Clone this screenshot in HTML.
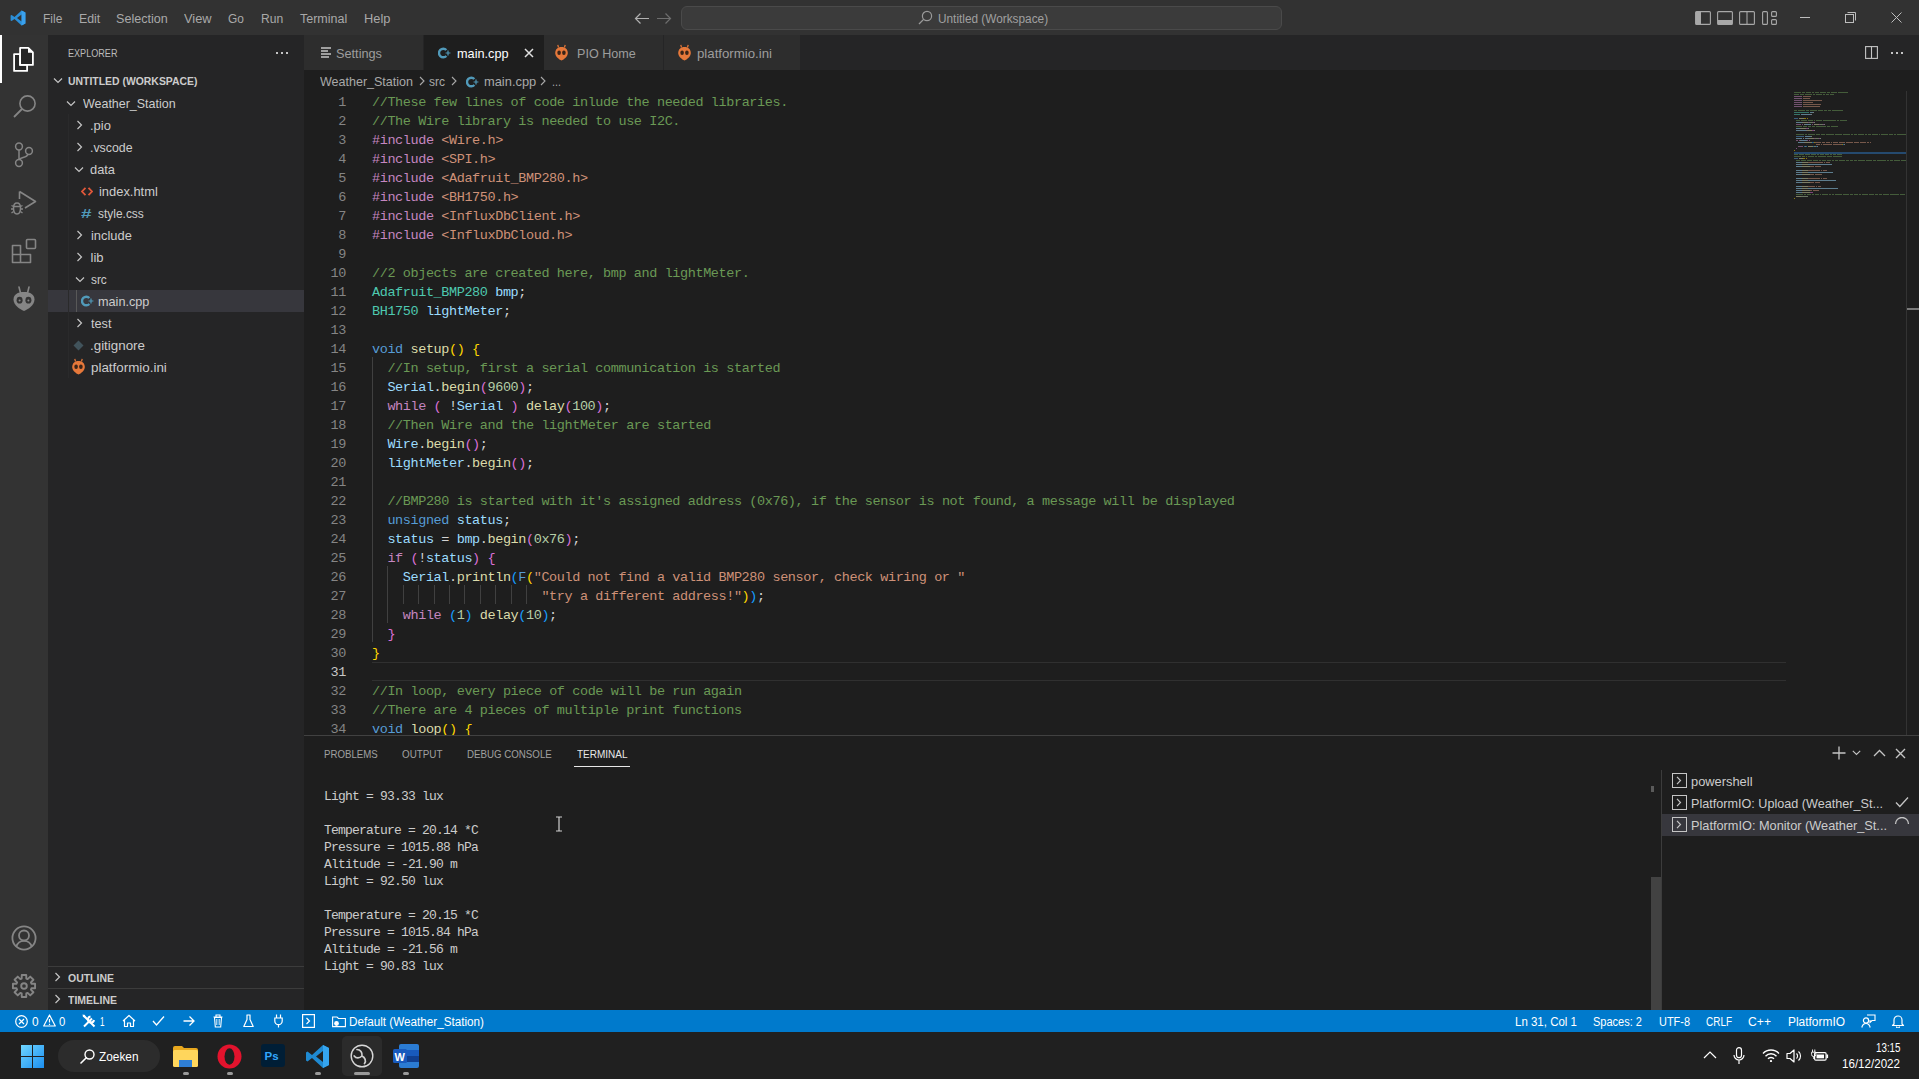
<!DOCTYPE html>
<html><head><meta charset="utf-8"><title>VS Code</title>
<style>
html,body{margin:0;padding:0;width:1919px;height:1079px;overflow:hidden;background:#1e1e1e;}
body{position:relative;font-family:"Liberation Sans",sans-serif;}
body>div,body>span,body>svg,.a{position:absolute;}
body>span{white-space:pre;transform-origin:0 0;}
</style></head><body>
<div style="left:0px;top:0px;width:1919px;height:35px;background:#323232;"></div>
<div style="left:0px;top:35px;width:48px;height:975px;background:#333333;"></div>
<div style="left:48px;top:35px;width:256px;height:975px;background:#252526;"></div>
<div style="left:304px;top:35px;width:1615px;height:975px;background:#1e1e1e;"></div>
<div style="left:304px;top:35px;width:1615px;height:35px;background:#252526;"></div>
<div style="left:0px;top:1010px;width:1919px;height:22px;background:#007acc;"></div>
<div style="left:0px;top:1032px;width:1919px;height:47px;background:#202020;"></div>
<svg style="left:10px;top:10px;width:16px;height:16px;" viewBox="0 0 16 16"><path d="M11.6 0.6 L15.4 2.4 V13.6 L11.6 15.4 L4.5 8.9 L1.6 11.1 L0.6 10.6 V5.4 L1.6 4.9 L4.5 7.1 Z M11.6 4.4 L7 8 L11.6 11.6 Z" fill="#2b8fd8"/><path d="M11.6 0.6 L15.4 2.4 V13.6 L11.6 15.4 Z" fill="#3aa1ee"/></svg>
<span style="left:43.2px;top:10.87px;font-family:'Liberation Sans', sans-serif;font-size:12.5px;line-height:16px;font-weight:400;color:#a9a9a9;letter-spacing:0px;transform:scaleX(0.9575);">File</span>
<span style="left:78.7px;top:10.87px;font-family:'Liberation Sans', sans-serif;font-size:12.5px;line-height:16px;font-weight:400;color:#a9a9a9;letter-spacing:0px;transform:scaleX(0.9885);">Edit</span>
<span style="left:116.2px;top:10.87px;font-family:'Liberation Sans', sans-serif;font-size:12.5px;line-height:16px;font-weight:400;color:#a9a9a9;letter-spacing:0px;transform:scaleX(1.0070);">Selection</span>
<span style="left:184.1px;top:10.87px;font-family:'Liberation Sans', sans-serif;font-size:12.5px;line-height:16px;font-weight:400;color:#a9a9a9;letter-spacing:0px;transform:scaleX(1.0270);">View</span>
<span style="left:228.1px;top:10.87px;font-family:'Liberation Sans', sans-serif;font-size:12.5px;line-height:16px;font-weight:400;color:#a9a9a9;letter-spacing:0px;transform:scaleX(0.9528);">Go</span>
<span style="left:260.5px;top:10.87px;font-family:'Liberation Sans', sans-serif;font-size:12.5px;line-height:16px;font-weight:400;color:#a9a9a9;letter-spacing:0px;transform:scaleX(0.9678);">Run</span>
<span style="left:300px;top:10.87px;font-family:'Liberation Sans', sans-serif;font-size:12.5px;line-height:16px;font-weight:400;color:#a9a9a9;letter-spacing:0px;">Terminal</span>
<span style="left:363.6px;top:10.87px;font-family:'Liberation Sans', sans-serif;font-size:12.5px;line-height:16px;font-weight:400;color:#a9a9a9;letter-spacing:0px;transform:scaleX(1.0265);">Help</span>
<svg style="left:634px;top:12px;width:16px;height:13px;" viewBox="0 0 16 13"><path d="M1.5 6.5 H15 M6.5 1.5 L1.5 6.5 L6.5 11.5" stroke="#b0b0b0" stroke-width="1.2" fill="none"/></svg>
<svg style="left:656px;top:12px;width:16px;height:13px;" viewBox="0 0 16 13"><path d="M1 6.5 H14.5 M9.5 1.5 L14.5 6.5 L9.5 11.5" stroke="#6e6e6e" stroke-width="1.2" fill="none"/></svg>
<div style="left:681px;top:6px;width:599px;height:22px;background:#3b3b3b;border:1px solid #4a4a4a;border-radius:6px;"></div>
<svg style="left:918px;top:10px;width:15px;height:15px;" viewBox="0 0 15 15"><circle cx="9" cy="6" r="4.6" stroke="#9a9a9a" stroke-width="1.2" fill="none"/><path d="M5.6 9.4 L1 14" stroke="#9a9a9a" stroke-width="1.3"/></svg>
<span style="left:937.9px;top:10.54px;font-family:'Liberation Sans', sans-serif;font-size:12px;line-height:16px;font-weight:400;color:#a0a0a0;letter-spacing:0px;transform:scaleX(0.9845);">Untitled (Workspace)</span>
<svg style="left:1695px;top:11px;width:16px;height:14px;" viewBox="0 0 16 14"><rect x="0.6" y="0.6" width="14.8" height="12.8" rx="1" stroke="#a8a8a8" stroke-width="1.1" fill="none"/><rect x="1" y="1" width="5" height="12" fill="#a8a8a8"/></svg>
<svg style="left:1717px;top:11px;width:16px;height:14px;" viewBox="0 0 16 14"><rect x="0.6" y="0.6" width="14.8" height="12.8" rx="1" stroke="#a8a8a8" stroke-width="1.1" fill="none"/><rect x="1" y="9" width="14" height="4" fill="#a8a8a8"/></svg>
<svg style="left:1739px;top:11px;width:16px;height:14px;" viewBox="0 0 16 14"><rect x="0.6" y="0.6" width="14.8" height="12.8" rx="1" stroke="#a8a8a8" stroke-width="1.1" fill="none"/><path d="M8 1 V13" stroke="#a8a8a8" stroke-width="1.1"/></svg>
<svg style="left:1762px;top:11px;width:15px;height:14px;" viewBox="0 0 15 14"><rect x="0.6" y="0.6" width="4.8" height="12.8" rx="1" stroke="#a8a8a8" stroke-width="1.1" fill="none"/><rect x="9.6" y="0.6" width="4.8" height="4.8" rx="1" stroke="#a8a8a8" stroke-width="1.1" fill="none"/><rect x="9.6" y="8.6" width="4.8" height="4.8" rx="1" stroke="#a8a8a8" stroke-width="1.1" fill="none"/></svg>
<div style="left:1800px;top:17px;width:10px;height:1px;background:#bdbdbd;"></div>
<svg style="left:1845px;top:12px;width:11px;height:11px;" viewBox="0 0 11 11"><rect x="0.5" y="2.5" width="8" height="8" stroke="#bdbdbd" fill="none"/><path d="M2.5 0.5 H10.5 V8.5" stroke="#bdbdbd" fill="none"/></svg>
<svg style="left:1891px;top:12px;width:11px;height:11px;" viewBox="0 0 11 11"><path d="M0.5 0.5 L10.5 10.5 M10.5 0.5 L0.5 10.5" stroke="#bdbdbd" stroke-width="1"/></svg>
<div style="left:0px;top:35px;width:2px;height:48px;background:#ffffff;"></div>
<svg style="left:0px;top:35px;width:48px;height:40px;" viewBox="0 0 48 40"><path d="M14.1 19.1 H20.1 V29.9 H27.1 V35.9 H14.1 Z" fill="#262626" stroke="#ffffff" stroke-width="1.8" stroke-linejoin="round"/><path d="M20.1 12.9 H28.3 L32.9 17.5 V29.9 H20.1 Z" fill="#262626" stroke="#ffffff" stroke-width="1.8" stroke-linejoin="round"/><path d="M28 13 V17.8 H32.8 Z" fill="#ffffff"/></svg>
<svg style="left:12px;top:93px;width:26px;height:26px;" viewBox="0 0 26 26"><circle cx="15.5" cy="10.5" r="7.6" stroke="#858585" stroke-width="1.6" fill="none"/><path d="M10 16 L2 24" stroke="#858585" stroke-width="1.8"/></svg>
<svg style="left:12px;top:141px;width:24px;height:28px;" viewBox="0 0 24 28"><circle cx="7" cy="5.5" r="3.4" stroke="#858585" stroke-width="1.5" fill="none"/><circle cx="17" cy="10" r="3.4" stroke="#858585" stroke-width="1.5" fill="none"/><circle cx="7" cy="22" r="3.4" stroke="#858585" stroke-width="1.5" fill="none"/><path d="M7 9 V18.5 M16 13 C15 17 9 16 7.5 18.5" stroke="#858585" stroke-width="1.5" fill="none"/></svg>
<svg style="left:0px;top:185px;width:48px;height:32px;" viewBox="0 0 48 32"><path d="M19.5 6.5 V14 M19.5 6.5 L35.5 16.5 L25 23" stroke="#858585" stroke-width="1.6" fill="none" stroke-linejoin="round"/><path d="M13.5 23 C13.5 19.5 15 18 17 18 C19 18 20.5 19.5 20.5 23 C20.5 27 19 29 17 29 C15 29 13.5 27 13.5 23 Z" stroke="#858585" stroke-width="1.5" fill="none"/><path d="M11.5 20.5 L13.5 21.5 M22.5 20.5 L20.5 21.5 M11 24 H13.5 M23 24 H20.5 M11.5 28 L13.5 26.5 M22.5 28 L20.5 26.5 M14 21.5 H20" stroke="#858585" stroke-width="1.3"/></svg>
<svg style="left:0px;top:235px;width:48px;height:32px;" viewBox="0 0 48 32"><path d="M12.5 10.5 H20.5 V19.5 H30.5 V27.5 H12.5 Z M12.5 19.5 H20.5 V27.5" stroke="#858585" stroke-width="1.6" fill="none" stroke-linejoin="round"/><rect x="26.5" y="4.5" width="9" height="9" rx="1" stroke="#858585" stroke-width="1.6" fill="none"/></svg>
<svg style="left:0px;top:284px;width:48px;height:30px;" viewBox="0 0 48 30"><path d="M19 3 L20.5 9 M29 3 L27.5 9" stroke="#858585" stroke-width="1.6" stroke-linecap="round"/><path d="M24 8 C30.5 8 34.5 10.5 34.5 15.5 C34.5 21 28 25.5 24 27 C20 25.5 13.5 21 13.5 15.5 C13.5 10.5 17.5 8 24 8 Z" fill="#858585"/><ellipse cx="19.6" cy="16.2" rx="3" ry="3.4" fill="#333"/><ellipse cx="28.4" cy="16.2" rx="3" ry="3.4" fill="#333"/><circle cx="19.6" cy="16.5" r="1" fill="#858585"/><circle cx="28.4" cy="16.5" r="1" fill="#858585"/></svg>
<svg style="left:11px;top:925px;width:26px;height:26px;" viewBox="0 0 26 26"><circle cx="13" cy="13" r="11.6" stroke="#858585" stroke-width="1.8" fill="none"/><circle cx="13" cy="10.5" r="5" stroke="#858585" stroke-width="1.8" fill="none"/><path d="M5.2 21.8 C6.5 17.5 9.5 15.8 13 15.8 C16.5 15.8 19.5 17.5 20.8 21.8" stroke="#858585" stroke-width="1.8" fill="none"/></svg>
<svg style="left:11px;top:973px;width:26px;height:26px;" viewBox="0 0 26 26"><polygon points="10.76,1.93 15.24,1.93 15.31,5.55 16.64,6.10 19.24,3.58 22.42,6.76 19.90,9.36 20.45,10.69 24.07,10.76 24.07,15.24 20.45,15.31 19.90,16.64 22.42,19.24 19.24,22.42 16.64,19.90 15.31,20.45 15.24,24.07 10.76,24.07 10.69,20.45 9.36,19.90 6.76,22.42 3.58,19.24 6.10,16.64 5.55,15.31 1.93,15.24 1.93,10.76 5.55,10.69 6.10,9.36 3.58,6.76 6.76,3.58 9.36,6.10 10.69,5.55" stroke="#858585" stroke-width="1.9" fill="none" stroke-linejoin="round"/><circle cx="13" cy="13" r="2.8" stroke="#858585" stroke-width="1.9" fill="none"/></svg>
<span style="left:68px;top:46.19px;font-family:'Liberation Sans', sans-serif;font-size:11px;line-height:14px;font-weight:400;color:#bbbbbb;letter-spacing:0px;transform:scaleX(0.8261);">EXPLORER</span>
<div style="left:276px;top:52px;width:2px;height:2px;background:#c5c5c5;"></div>
<div style="left:281px;top:52px;width:2px;height:2px;background:#c5c5c5;"></div>
<div style="left:286px;top:52px;width:2px;height:2px;background:#c5c5c5;"></div>
<svg style="left:53px;top:77px;width:10px;height:7px;" viewBox="0 0 10 7"><path d="M1 1.5 L5 5.5 L9 1.5" stroke="#c5c5c5" stroke-width="1.2" fill="none"/></svg>
<span style="left:68px;top:74.19px;font-family:'Liberation Sans', sans-serif;font-size:11px;line-height:14px;font-weight:700;color:#cccccc;letter-spacing:0px;transform:scaleX(0.9474);">UNTITLED (WORKSPACE)</span>
<div style="left:48px;top:290px;width:256px;height:22px;background:#37373d;"></div>
<div style="left:76px;top:290px;width:1px;height:22px;background:#585858;"></div>
<div style="left:68px;top:114px;width:1px;height:264px;background:#2a2a2b;"></div>
<span style="left:82.7px;top:94.80px;font-family:'Liberation Sans', sans-serif;font-size:13px;line-height:17px;font-weight:400;color:#cccccc;letter-spacing:0px;transform:scaleX(0.9585);">Weather_Station</span>
<svg style="left:66px;top:100px;width:10px;height:7px;" viewBox="0 0 10 7"><path d="M1 1.5 L5 5.5 L9 1.5" stroke="#c5c5c5" stroke-width="1.2" fill="none"/></svg>
<span style="left:89.8px;top:116.80px;font-family:'Liberation Sans', sans-serif;font-size:13px;line-height:17px;font-weight:400;color:#cccccc;letter-spacing:0px;transform:scaleX(0.9967);">.pio</span>
<svg style="left:76px;top:120px;width:7px;height:10px;" viewBox="0 0 7 10"><path d="M1.5 1 L5.5 5 L1.5 9" stroke="#c5c5c5" stroke-width="1.2" fill="none"/></svg>
<span style="left:89.8px;top:138.80px;font-family:'Liberation Sans', sans-serif;font-size:13px;line-height:17px;font-weight:400;color:#cccccc;letter-spacing:0px;transform:scaleX(0.9506);">.vscode</span>
<svg style="left:76px;top:142px;width:7px;height:10px;" viewBox="0 0 7 10"><path d="M1.5 1 L5.5 5 L1.5 9" stroke="#c5c5c5" stroke-width="1.2" fill="none"/></svg>
<span style="left:90px;top:160.80px;font-family:'Liberation Sans', sans-serif;font-size:13px;line-height:17px;font-weight:400;color:#cccccc;letter-spacing:0px;transform:scaleX(0.9877);">data</span>
<svg style="left:74.3px;top:166px;width:10px;height:7px;" viewBox="0 0 10 7"><path d="M1 1.5 L5 5.5 L9 1.5" stroke="#c5c5c5" stroke-width="1.2" fill="none"/></svg>
<span style="left:98.5px;top:182.80px;font-family:'Liberation Sans', sans-serif;font-size:13px;line-height:17px;font-weight:400;color:#cccccc;letter-spacing:0px;transform:scaleX(0.9924);">index.html</span>
<svg style="left:80.8px;top:187px;width:12px;height:9px;" viewBox="0 0 12 9"><path d="M4.5 0.8 L1 4.5 L4.5 8.2 M7.5 0.8 L11 4.5 L7.5 8.2" stroke="#e0583a" stroke-width="1.8" fill="none"/></svg>
<span style="left:98px;top:204.80px;font-family:'Liberation Sans', sans-serif;font-size:13px;line-height:17px;font-weight:400;color:#cccccc;letter-spacing:0px;transform:scaleX(0.9189);">style.css</span>
<span style="left:80.5px;top:204.80px;font-family:'Liberation Sans', sans-serif;font-size:13px;line-height:17px;font-weight:700;color:#519aba;letter-spacing:0px;transform:scaleX(1.4514);">#</span>
<span style="left:90.5px;top:226.80px;font-family:'Liberation Sans', sans-serif;font-size:13px;line-height:17px;font-weight:400;color:#cccccc;letter-spacing:0px;transform:scaleX(0.9902);">include</span>
<svg style="left:76.3px;top:230px;width:7px;height:10px;" viewBox="0 0 7 10"><path d="M1.5 1 L5.5 5 L1.5 9" stroke="#c5c5c5" stroke-width="1.2" fill="none"/></svg>
<span style="left:90.5px;top:248.80px;font-family:'Liberation Sans', sans-serif;font-size:13px;line-height:17px;font-weight:400;color:#cccccc;letter-spacing:0px;">lib</span>
<svg style="left:76.3px;top:252px;width:7px;height:10px;" viewBox="0 0 7 10"><path d="M1.5 1 L5.5 5 L1.5 9" stroke="#c5c5c5" stroke-width="1.2" fill="none"/></svg>
<span style="left:90.5px;top:270.80px;font-family:'Liberation Sans', sans-serif;font-size:13px;line-height:17px;font-weight:400;color:#cccccc;letter-spacing:0px;transform:scaleX(0.9110);">src</span>
<svg style="left:74.7px;top:276px;width:10px;height:7px;" viewBox="0 0 10 7"><path d="M1 1.5 L5 5.5 L9 1.5" stroke="#c5c5c5" stroke-width="1.2" fill="none"/></svg>
<span style="left:98.3px;top:292.80px;font-family:'Liberation Sans', sans-serif;font-size:13px;line-height:17px;font-weight:400;color:#cccccc;letter-spacing:0px;transform:scaleX(0.9744);">main.cpp</span>
<svg style="left:80.5px;top:295px;width:13px;height:12px;" viewBox="0 0 13 12"><path d="M8.4 3 A4.3 4.3 0 1 0 8.4 9" stroke="#519aba" stroke-width="2.4" fill="none"/><path d="M7.6 6 H12.4 M10 3.6 V8.4" stroke="#519aba" stroke-width="1.2"/></svg>
<span style="left:90.5px;top:314.80px;font-family:'Liberation Sans', sans-serif;font-size:13px;line-height:17px;font-weight:400;color:#cccccc;letter-spacing:0px;transform:scaleX(0.9776);">test</span>
<svg style="left:76.3px;top:318px;width:7px;height:10px;" viewBox="0 0 7 10"><path d="M1.5 1 L5.5 5 L1.5 9" stroke="#c5c5c5" stroke-width="1.2" fill="none"/></svg>
<span style="left:89.7px;top:336.80px;font-family:'Liberation Sans', sans-serif;font-size:13px;line-height:17px;font-weight:400;color:#cccccc;letter-spacing:0px;transform:scaleX(1.0283);">.gitignore</span>
<svg style="left:72.7px;top:340px;width:11px;height:11px;" viewBox="0 0 11 11"><path d="M5.5 0.5 L10.5 5.5 L5.5 10.5 L0.5 5.5 Z" fill="#41535b"/></svg>
<span style="left:90.5px;top:358.80px;font-family:'Liberation Sans', sans-serif;font-size:13px;line-height:17px;font-weight:400;color:#cccccc;letter-spacing:0px;transform:scaleX(1.0285);">platformio.ini</span>
<svg style="left:72px;top:358px;width:13px;height:17px;" viewBox="0 0 13 17"><path d="M3.5 3.5 L2.8 0.8 M9.5 3.5 L10.2 0.8" stroke="#e6783a" stroke-width="1.2"/><path d="M6.5 3 C10.5 3 12.8 5.6 12.8 9 C12.8 12.5 9 15.5 6.5 16.5 C4 15.5 0.2 12.5 0.2 9 C0.2 5.6 2.5 3 6.5 3 Z" fill="#e6783a"/><ellipse cx="4.1" cy="8.8" rx="1.8" ry="2.2" fill="#3a2418"/><ellipse cx="8.9" cy="8.8" rx="1.8" ry="2.2" fill="#3a2418"/></svg>
<div style="left:48px;top:966px;width:256px;height:1px;background:#3c3c3c;"></div>
<div style="left:48px;top:988px;width:256px;height:1px;background:#3c3c3c;"></div>
<svg style="left:54px;top:972px;width:7px;height:10px;" viewBox="0 0 7 10"><path d="M1.5 1 L5.5 5 L1.5 9" stroke="#c5c5c5" stroke-width="1.2" fill="none"/></svg>
<svg style="left:54px;top:994px;width:7px;height:10px;" viewBox="0 0 7 10"><path d="M1.5 1 L5.5 5 L1.5 9" stroke="#c5c5c5" stroke-width="1.2" fill="none"/></svg>
<span style="left:68px;top:971.19px;font-family:'Liberation Sans', sans-serif;font-size:11px;line-height:14px;font-weight:700;color:#cccccc;letter-spacing:0px;transform:scaleX(0.9528);">OUTLINE</span>
<span style="left:68px;top:993.19px;font-family:'Liberation Sans', sans-serif;font-size:11px;line-height:14px;font-weight:700;color:#cccccc;letter-spacing:0px;transform:scaleX(0.9544);">TIMELINE</span>
<div style="left:304px;top:35px;width:119px;height:35px;background:#2d2d2d;"></div>
<div style="left:424px;top:35px;width:120px;height:35px;background:#1e1e1e;"></div>
<div style="left:544px;top:35px;width:119px;height:35px;background:#2d2d2d;"></div>
<div style="left:664px;top:35px;width:136px;height:35px;background:#2d2d2d;"></div>
<svg style="left:321px;top:47px;width:11px;height:11px;" viewBox="0 0 11 11"><path d="M0 1 H10 M0 4 H7 M0 7 H10 M0 10 H8" stroke="#c5c5c5" stroke-width="1.6"/></svg>
<span style="left:336px;top:44.80px;font-family:'Liberation Sans', sans-serif;font-size:13px;line-height:17px;font-weight:400;color:#9d9d9d;letter-spacing:0px;transform:scaleX(0.9790);">Settings</span>
<svg style="left:438px;top:47px;width:13px;height:12px;" viewBox="0 0 13 12"><path d="M8.4 3 A4.3 4.3 0 1 0 8.4 9" stroke="#519aba" stroke-width="2.4" fill="none"/><path d="M7.6 6 H12.4 M10 3.6 V8.4" stroke="#519aba" stroke-width="1.2"/></svg>
<span style="left:456.5px;top:44.80px;font-family:'Liberation Sans', sans-serif;font-size:13px;line-height:17px;font-weight:400;color:#ffffff;letter-spacing:0px;transform:scaleX(0.9763);">main.cpp</span>
<svg style="left:524px;top:48px;width:10px;height:10px;" viewBox="0 0 10 10"><path d="M1 1 L9 9 M9 1 L1 9" stroke="#e0e0e0" stroke-width="1.5"/></svg>
<svg style="left:555px;top:44px;width:13px;height:17px;" viewBox="0 0 13 17"><path d="M3.5 3.5 L2.8 0.8 M9.5 3.5 L10.2 0.8" stroke="#e6783a" stroke-width="1.2"/><path d="M6.5 3 C10.5 3 12.8 5.6 12.8 9 C12.8 12.5 9 15.5 6.5 16.5 C4 15.5 0.2 12.5 0.2 9 C0.2 5.6 2.5 3 6.5 3 Z" fill="#e6783a"/><ellipse cx="4.1" cy="8.8" rx="1.8" ry="2.2" fill="#3a2418"/><ellipse cx="8.9" cy="8.8" rx="1.8" ry="2.2" fill="#3a2418"/></svg>
<span style="left:576.5px;top:44.70px;font-family:'Liberation Sans', sans-serif;font-size:13px;line-height:17px;font-weight:400;color:#9d9d9d;letter-spacing:0px;transform:scaleX(0.9673);">PIO Home</span>
<svg style="left:678px;top:44px;width:13px;height:17px;" viewBox="0 0 13 17"><path d="M3.5 3.5 L2.8 0.8 M9.5 3.5 L10.2 0.8" stroke="#e6783a" stroke-width="1.2"/><path d="M6.5 3 C10.5 3 12.8 5.6 12.8 9 C12.8 12.5 9 15.5 6.5 16.5 C4 15.5 0.2 12.5 0.2 9 C0.2 5.6 2.5 3 6.5 3 Z" fill="#e6783a"/><ellipse cx="4.1" cy="8.8" rx="1.8" ry="2.2" fill="#3a2418"/><ellipse cx="8.9" cy="8.8" rx="1.8" ry="2.2" fill="#3a2418"/></svg>
<span style="left:697px;top:44.70px;font-family:'Liberation Sans', sans-serif;font-size:13px;line-height:17px;font-weight:400;color:#9d9d9d;letter-spacing:0px;transform:scaleX(1.0176);">platformio.ini</span>
<svg style="left:1865px;top:46px;width:13px;height:13px;" viewBox="0 0 13 13"><rect x="0.6" y="0.6" width="11.8" height="11.8" stroke="#c5c5c5" stroke-width="1.1" fill="none"/><path d="M6.5 0.6 V12.4" stroke="#c5c5c5" stroke-width="1.1"/></svg>
<div style="left:1891px;top:52px;width:2px;height:2px;background:#c5c5c5;"></div>
<div style="left:1896px;top:52px;width:2px;height:2px;background:#c5c5c5;"></div>
<div style="left:1901px;top:52px;width:2px;height:2px;background:#c5c5c5;"></div>
<span style="left:320px;top:73.00px;font-family:'Liberation Sans', sans-serif;font-size:13px;line-height:17px;font-weight:400;color:#a9a9a9;letter-spacing:0px;transform:scaleX(0.9626);">Weather_Station</span>
<svg style="left:419px;top:76px;width:6px;height:10px;" viewBox="0 0 6 10"><path d="M1 1 L5 5 L1 9" stroke="#a9a9a9" stroke-width="1.1" fill="none"/></svg>
<span style="left:429px;top:73.00px;font-family:'Liberation Sans', sans-serif;font-size:13px;line-height:17px;font-weight:400;color:#a9a9a9;letter-spacing:0px;transform:scaleX(0.9225);">src</span>
<svg style="left:451px;top:76px;width:6px;height:10px;" viewBox="0 0 6 10"><path d="M1 1 L5 5 L1 9" stroke="#a9a9a9" stroke-width="1.1" fill="none"/></svg>
<svg style="left:466px;top:76px;width:13px;height:12px;" viewBox="0 0 13 12"><path d="M8.4 3 A4.3 4.3 0 1 0 8.4 9" stroke="#519aba" stroke-width="2.4" fill="none"/><path d="M7.6 6 H12.4 M10 3.6 V8.4" stroke="#519aba" stroke-width="1.2"/></svg>
<span style="left:483.6px;top:73.00px;font-family:'Liberation Sans', sans-serif;font-size:13px;line-height:17px;font-weight:400;color:#a9a9a9;letter-spacing:0px;transform:scaleX(0.9896);">main.cpp</span>
<svg style="left:540px;top:76px;width:6px;height:10px;" viewBox="0 0 6 10"><path d="M1 1 L5 5 L1 9" stroke="#a9a9a9" stroke-width="1.1" fill="none"/></svg>
<span style="left:552px;top:73.00px;font-family:'Liberation Sans', sans-serif;font-size:13px;line-height:17px;font-weight:400;color:#a9a9a9;letter-spacing:0px;transform:scaleX(0.8300);">...</span>
<div style="left:372px;top:662px;width:1414px;height:17px;border-top:1px solid #303030;border-bottom:1px solid #303030;"></div>
<div style="left:372px;top:357px;width:1px;height:285px;background:#404040;"></div>
<div style="left:387px;top:566px;width:1px;height:57px;background:#404040;"></div>
<div style="left:403px;top:585px;width:1px;height:19px;background:#404040;"></div>
<div style="left:418px;top:585px;width:1px;height:19px;background:#404040;"></div>
<div style="left:434px;top:585px;width:1px;height:19px;background:#404040;"></div>
<div style="left:449px;top:585px;width:1px;height:19px;background:#404040;"></div>
<div style="left:464px;top:585px;width:1px;height:19px;background:#404040;"></div>
<div style="left:480px;top:585px;width:1px;height:19px;background:#404040;"></div>
<div style="left:495px;top:585px;width:1px;height:19px;background:#404040;"></div>
<div style="left:511px;top:585px;width:1px;height:19px;background:#404040;"></div>
<div style="left:526px;top:585px;width:1px;height:19px;background:#404040;"></div>
<span style="left:338.3px;top:94.01px;font-family:'Liberation Mono', monospace;font-size:13.5px;line-height:18px;font-weight:400;color:#858585;letter-spacing:-0.39999999999999947px;">1</span>
<span style="left:372.0px;top:94.01px;font-family:'Liberation Mono', monospace;font-size:13.5px;line-height:18px;font-weight:400;color:#6a9955;letter-spacing:-0.39999999999999947px;">//These few lines of code inlude the needed libraries.</span>
<span style="left:338.3px;top:113.01px;font-family:'Liberation Mono', monospace;font-size:13.5px;line-height:18px;font-weight:400;color:#858585;letter-spacing:-0.39999999999999947px;">2</span>
<span style="left:372.0px;top:113.01px;font-family:'Liberation Mono', monospace;font-size:13.5px;line-height:18px;font-weight:400;color:#6a9955;letter-spacing:-0.39999999999999947px;">//The Wire library is needed to use I2C.</span>
<span style="left:338.3px;top:132.01px;font-family:'Liberation Mono', monospace;font-size:13.5px;line-height:18px;font-weight:400;color:#858585;letter-spacing:-0.39999999999999947px;">3</span>
<span style="left:372.0px;top:132.01px;font-family:'Liberation Mono', monospace;font-size:13.5px;line-height:18px;font-weight:400;color:#c586c0;letter-spacing:-0.39999999999999947px;">#include </span>
<span style="left:441.3px;top:132.01px;font-family:'Liberation Mono', monospace;font-size:13.5px;line-height:18px;font-weight:400;color:#ce9178;letter-spacing:-0.39999999999999947px;">&lt;Wire.h&gt;</span>
<span style="left:338.3px;top:151.01px;font-family:'Liberation Mono', monospace;font-size:13.5px;line-height:18px;font-weight:400;color:#858585;letter-spacing:-0.39999999999999947px;">4</span>
<span style="left:372.0px;top:151.01px;font-family:'Liberation Mono', monospace;font-size:13.5px;line-height:18px;font-weight:400;color:#c586c0;letter-spacing:-0.39999999999999947px;">#include </span>
<span style="left:441.3px;top:151.01px;font-family:'Liberation Mono', monospace;font-size:13.5px;line-height:18px;font-weight:400;color:#ce9178;letter-spacing:-0.39999999999999947px;">&lt;SPI.h&gt;</span>
<span style="left:338.3px;top:170.01px;font-family:'Liberation Mono', monospace;font-size:13.5px;line-height:18px;font-weight:400;color:#858585;letter-spacing:-0.39999999999999947px;">5</span>
<span style="left:372.0px;top:170.01px;font-family:'Liberation Mono', monospace;font-size:13.5px;line-height:18px;font-weight:400;color:#c586c0;letter-spacing:-0.39999999999999947px;">#include </span>
<span style="left:441.3px;top:170.01px;font-family:'Liberation Mono', monospace;font-size:13.5px;line-height:18px;font-weight:400;color:#ce9178;letter-spacing:-0.39999999999999947px;">&lt;Adafruit_BMP280.h&gt;</span>
<span style="left:338.3px;top:189.01px;font-family:'Liberation Mono', monospace;font-size:13.5px;line-height:18px;font-weight:400;color:#858585;letter-spacing:-0.39999999999999947px;">6</span>
<span style="left:372.0px;top:189.01px;font-family:'Liberation Mono', monospace;font-size:13.5px;line-height:18px;font-weight:400;color:#c586c0;letter-spacing:-0.39999999999999947px;">#include </span>
<span style="left:441.3px;top:189.01px;font-family:'Liberation Mono', monospace;font-size:13.5px;line-height:18px;font-weight:400;color:#ce9178;letter-spacing:-0.39999999999999947px;">&lt;BH1750.h&gt;</span>
<span style="left:338.3px;top:208.01px;font-family:'Liberation Mono', monospace;font-size:13.5px;line-height:18px;font-weight:400;color:#858585;letter-spacing:-0.39999999999999947px;">7</span>
<span style="left:372.0px;top:208.01px;font-family:'Liberation Mono', monospace;font-size:13.5px;line-height:18px;font-weight:400;color:#c586c0;letter-spacing:-0.39999999999999947px;">#include </span>
<span style="left:441.3px;top:208.01px;font-family:'Liberation Mono', monospace;font-size:13.5px;line-height:18px;font-weight:400;color:#ce9178;letter-spacing:-0.39999999999999947px;">&lt;InfluxDbClient.h&gt;</span>
<span style="left:338.3px;top:227.01px;font-family:'Liberation Mono', monospace;font-size:13.5px;line-height:18px;font-weight:400;color:#858585;letter-spacing:-0.39999999999999947px;">8</span>
<span style="left:372.0px;top:227.01px;font-family:'Liberation Mono', monospace;font-size:13.5px;line-height:18px;font-weight:400;color:#c586c0;letter-spacing:-0.39999999999999947px;">#include </span>
<span style="left:441.3px;top:227.01px;font-family:'Liberation Mono', monospace;font-size:13.5px;line-height:18px;font-weight:400;color:#ce9178;letter-spacing:-0.39999999999999947px;">&lt;InfluxDbCloud.h&gt;</span>
<span style="left:338.3px;top:246.01px;font-family:'Liberation Mono', monospace;font-size:13.5px;line-height:18px;font-weight:400;color:#858585;letter-spacing:-0.39999999999999947px;">9</span>
<span style="left:330.6px;top:265.01px;font-family:'Liberation Mono', monospace;font-size:13.5px;line-height:18px;font-weight:400;color:#858585;letter-spacing:-0.39999999999999947px;">10</span>
<span style="left:372.0px;top:265.01px;font-family:'Liberation Mono', monospace;font-size:13.5px;line-height:18px;font-weight:400;color:#6a9955;letter-spacing:-0.39999999999999947px;">//2 objects are created here, bmp and lightMeter.</span>
<span style="left:330.6px;top:284.01px;font-family:'Liberation Mono', monospace;font-size:13.5px;line-height:18px;font-weight:400;color:#858585;letter-spacing:-0.39999999999999947px;">11</span>
<span style="left:372.0px;top:284.01px;font-family:'Liberation Mono', monospace;font-size:13.5px;line-height:18px;font-weight:400;color:#4ec9b0;letter-spacing:-0.39999999999999947px;">Adafruit_BMP280</span>
<span style="left:495.2px;top:284.01px;font-family:'Liberation Mono', monospace;font-size:13.5px;line-height:18px;font-weight:400;color:#9cdcfe;letter-spacing:-0.39999999999999947px;">bmp</span>
<span style="left:518.3px;top:284.01px;font-family:'Liberation Mono', monospace;font-size:13.5px;line-height:18px;font-weight:400;color:#d4d4d4;letter-spacing:-0.39999999999999947px;">;</span>
<span style="left:330.6px;top:303.01px;font-family:'Liberation Mono', monospace;font-size:13.5px;line-height:18px;font-weight:400;color:#858585;letter-spacing:-0.39999999999999947px;">12</span>
<span style="left:372.0px;top:303.01px;font-family:'Liberation Mono', monospace;font-size:13.5px;line-height:18px;font-weight:400;color:#4ec9b0;letter-spacing:-0.39999999999999947px;">BH1750</span>
<span style="left:425.9px;top:303.01px;font-family:'Liberation Mono', monospace;font-size:13.5px;line-height:18px;font-weight:400;color:#9cdcfe;letter-spacing:-0.39999999999999947px;">lightMeter</span>
<span style="left:502.9px;top:303.01px;font-family:'Liberation Mono', monospace;font-size:13.5px;line-height:18px;font-weight:400;color:#d4d4d4;letter-spacing:-0.39999999999999947px;">;</span>
<span style="left:330.6px;top:322.01px;font-family:'Liberation Mono', monospace;font-size:13.5px;line-height:18px;font-weight:400;color:#858585;letter-spacing:-0.39999999999999947px;">13</span>
<span style="left:330.6px;top:341.01px;font-family:'Liberation Mono', monospace;font-size:13.5px;line-height:18px;font-weight:400;color:#858585;letter-spacing:-0.39999999999999947px;">14</span>
<span style="left:372.0px;top:341.01px;font-family:'Liberation Mono', monospace;font-size:13.5px;line-height:18px;font-weight:400;color:#569cd6;letter-spacing:-0.39999999999999947px;">void</span>
<span style="left:410.5px;top:341.01px;font-family:'Liberation Mono', monospace;font-size:13.5px;line-height:18px;font-weight:400;color:#dcdcaa;letter-spacing:-0.39999999999999947px;">setup</span>
<span style="left:449.0px;top:341.01px;font-family:'Liberation Mono', monospace;font-size:13.5px;line-height:18px;font-weight:400;color:#ffd700;letter-spacing:-0.39999999999999947px;">()</span>
<span style="left:472.1px;top:341.01px;font-family:'Liberation Mono', monospace;font-size:13.5px;line-height:18px;font-weight:400;color:#ffd700;letter-spacing:-0.39999999999999947px;">{</span>
<span style="left:330.6px;top:360.01px;font-family:'Liberation Mono', monospace;font-size:13.5px;line-height:18px;font-weight:400;color:#858585;letter-spacing:-0.39999999999999947px;">15</span>
<span style="left:387.4px;top:360.01px;font-family:'Liberation Mono', monospace;font-size:13.5px;line-height:18px;font-weight:400;color:#6a9955;letter-spacing:-0.39999999999999947px;">//In setup, first a serial communication is started</span>
<span style="left:330.6px;top:379.01px;font-family:'Liberation Mono', monospace;font-size:13.5px;line-height:18px;font-weight:400;color:#858585;letter-spacing:-0.39999999999999947px;">16</span>
<span style="left:387.4px;top:379.01px;font-family:'Liberation Mono', monospace;font-size:13.5px;line-height:18px;font-weight:400;color:#9cdcfe;letter-spacing:-0.39999999999999947px;">Serial</span>
<span style="left:433.6px;top:379.01px;font-family:'Liberation Mono', monospace;font-size:13.5px;line-height:18px;font-weight:400;color:#d4d4d4;letter-spacing:-0.39999999999999947px;">.</span>
<span style="left:441.3px;top:379.01px;font-family:'Liberation Mono', monospace;font-size:13.5px;line-height:18px;font-weight:400;color:#dcdcaa;letter-spacing:-0.39999999999999947px;">begin</span>
<span style="left:479.8px;top:379.01px;font-family:'Liberation Mono', monospace;font-size:13.5px;line-height:18px;font-weight:400;color:#da70d6;letter-spacing:-0.39999999999999947px;">(</span>
<span style="left:487.5px;top:379.01px;font-family:'Liberation Mono', monospace;font-size:13.5px;line-height:18px;font-weight:400;color:#b5cea8;letter-spacing:-0.39999999999999947px;">9600</span>
<span style="left:518.3px;top:379.01px;font-family:'Liberation Mono', monospace;font-size:13.5px;line-height:18px;font-weight:400;color:#da70d6;letter-spacing:-0.39999999999999947px;">)</span>
<span style="left:526.0px;top:379.01px;font-family:'Liberation Mono', monospace;font-size:13.5px;line-height:18px;font-weight:400;color:#d4d4d4;letter-spacing:-0.39999999999999947px;">;</span>
<span style="left:330.6px;top:398.01px;font-family:'Liberation Mono', monospace;font-size:13.5px;line-height:18px;font-weight:400;color:#858585;letter-spacing:-0.39999999999999947px;">17</span>
<span style="left:387.4px;top:398.01px;font-family:'Liberation Mono', monospace;font-size:13.5px;line-height:18px;font-weight:400;color:#c586c0;letter-spacing:-0.39999999999999947px;">while</span>
<span style="left:433.6px;top:398.01px;font-family:'Liberation Mono', monospace;font-size:13.5px;line-height:18px;font-weight:400;color:#da70d6;letter-spacing:-0.39999999999999947px;">(</span>
<span style="left:449.0px;top:398.01px;font-family:'Liberation Mono', monospace;font-size:13.5px;line-height:18px;font-weight:400;color:#d4d4d4;letter-spacing:-0.39999999999999947px;">!</span>
<span style="left:456.7px;top:398.01px;font-family:'Liberation Mono', monospace;font-size:13.5px;line-height:18px;font-weight:400;color:#9cdcfe;letter-spacing:-0.39999999999999947px;">Serial</span>
<span style="left:510.6px;top:398.01px;font-family:'Liberation Mono', monospace;font-size:13.5px;line-height:18px;font-weight:400;color:#da70d6;letter-spacing:-0.39999999999999947px;">)</span>
<span style="left:526.0px;top:398.01px;font-family:'Liberation Mono', monospace;font-size:13.5px;line-height:18px;font-weight:400;color:#dcdcaa;letter-spacing:-0.39999999999999947px;">delay</span>
<span style="left:564.5px;top:398.01px;font-family:'Liberation Mono', monospace;font-size:13.5px;line-height:18px;font-weight:400;color:#da70d6;letter-spacing:-0.39999999999999947px;">(</span>
<span style="left:572.2px;top:398.01px;font-family:'Liberation Mono', monospace;font-size:13.5px;line-height:18px;font-weight:400;color:#b5cea8;letter-spacing:-0.39999999999999947px;">100</span>
<span style="left:595.3px;top:398.01px;font-family:'Liberation Mono', monospace;font-size:13.5px;line-height:18px;font-weight:400;color:#da70d6;letter-spacing:-0.39999999999999947px;">)</span>
<span style="left:603.0px;top:398.01px;font-family:'Liberation Mono', monospace;font-size:13.5px;line-height:18px;font-weight:400;color:#d4d4d4;letter-spacing:-0.39999999999999947px;">;</span>
<span style="left:330.6px;top:417.01px;font-family:'Liberation Mono', monospace;font-size:13.5px;line-height:18px;font-weight:400;color:#858585;letter-spacing:-0.39999999999999947px;">18</span>
<span style="left:387.4px;top:417.01px;font-family:'Liberation Mono', monospace;font-size:13.5px;line-height:18px;font-weight:400;color:#6a9955;letter-spacing:-0.39999999999999947px;">//Then Wire and the lightMeter are started</span>
<span style="left:330.6px;top:436.01px;font-family:'Liberation Mono', monospace;font-size:13.5px;line-height:18px;font-weight:400;color:#858585;letter-spacing:-0.39999999999999947px;">19</span>
<span style="left:387.4px;top:436.01px;font-family:'Liberation Mono', monospace;font-size:13.5px;line-height:18px;font-weight:400;color:#9cdcfe;letter-spacing:-0.39999999999999947px;">Wire</span>
<span style="left:418.2px;top:436.01px;font-family:'Liberation Mono', monospace;font-size:13.5px;line-height:18px;font-weight:400;color:#d4d4d4;letter-spacing:-0.39999999999999947px;">.</span>
<span style="left:425.9px;top:436.01px;font-family:'Liberation Mono', monospace;font-size:13.5px;line-height:18px;font-weight:400;color:#dcdcaa;letter-spacing:-0.39999999999999947px;">begin</span>
<span style="left:464.4px;top:436.01px;font-family:'Liberation Mono', monospace;font-size:13.5px;line-height:18px;font-weight:400;color:#da70d6;letter-spacing:-0.39999999999999947px;">()</span>
<span style="left:479.8px;top:436.01px;font-family:'Liberation Mono', monospace;font-size:13.5px;line-height:18px;font-weight:400;color:#d4d4d4;letter-spacing:-0.39999999999999947px;">;</span>
<span style="left:330.6px;top:455.01px;font-family:'Liberation Mono', monospace;font-size:13.5px;line-height:18px;font-weight:400;color:#858585;letter-spacing:-0.39999999999999947px;">20</span>
<span style="left:387.4px;top:455.01px;font-family:'Liberation Mono', monospace;font-size:13.5px;line-height:18px;font-weight:400;color:#9cdcfe;letter-spacing:-0.39999999999999947px;">lightMeter</span>
<span style="left:464.4px;top:455.01px;font-family:'Liberation Mono', monospace;font-size:13.5px;line-height:18px;font-weight:400;color:#d4d4d4;letter-spacing:-0.39999999999999947px;">.</span>
<span style="left:472.1px;top:455.01px;font-family:'Liberation Mono', monospace;font-size:13.5px;line-height:18px;font-weight:400;color:#dcdcaa;letter-spacing:-0.39999999999999947px;">begin</span>
<span style="left:510.6px;top:455.01px;font-family:'Liberation Mono', monospace;font-size:13.5px;line-height:18px;font-weight:400;color:#da70d6;letter-spacing:-0.39999999999999947px;">()</span>
<span style="left:526.0px;top:455.01px;font-family:'Liberation Mono', monospace;font-size:13.5px;line-height:18px;font-weight:400;color:#d4d4d4;letter-spacing:-0.39999999999999947px;">;</span>
<span style="left:330.6px;top:474.01px;font-family:'Liberation Mono', monospace;font-size:13.5px;line-height:18px;font-weight:400;color:#858585;letter-spacing:-0.39999999999999947px;">21</span>
<span style="left:330.6px;top:493.01px;font-family:'Liberation Mono', monospace;font-size:13.5px;line-height:18px;font-weight:400;color:#858585;letter-spacing:-0.39999999999999947px;">22</span>
<span style="left:387.4px;top:493.01px;font-family:'Liberation Mono', monospace;font-size:13.5px;line-height:18px;font-weight:400;color:#6a9955;letter-spacing:-0.39999999999999947px;">//BMP280 is started with it&#x27;s assigned address (0x76), if the sensor is not found, a message will be displayed</span>
<span style="left:330.6px;top:512.01px;font-family:'Liberation Mono', monospace;font-size:13.5px;line-height:18px;font-weight:400;color:#858585;letter-spacing:-0.39999999999999947px;">23</span>
<span style="left:387.4px;top:512.01px;font-family:'Liberation Mono', monospace;font-size:13.5px;line-height:18px;font-weight:400;color:#569cd6;letter-spacing:-0.39999999999999947px;">unsigned</span>
<span style="left:456.7px;top:512.01px;font-family:'Liberation Mono', monospace;font-size:13.5px;line-height:18px;font-weight:400;color:#9cdcfe;letter-spacing:-0.39999999999999947px;">status</span>
<span style="left:502.9px;top:512.01px;font-family:'Liberation Mono', monospace;font-size:13.5px;line-height:18px;font-weight:400;color:#d4d4d4;letter-spacing:-0.39999999999999947px;">;</span>
<span style="left:330.6px;top:531.01px;font-family:'Liberation Mono', monospace;font-size:13.5px;line-height:18px;font-weight:400;color:#858585;letter-spacing:-0.39999999999999947px;">24</span>
<span style="left:387.4px;top:531.01px;font-family:'Liberation Mono', monospace;font-size:13.5px;line-height:18px;font-weight:400;color:#9cdcfe;letter-spacing:-0.39999999999999947px;">status</span>
<span style="left:441.3px;top:531.01px;font-family:'Liberation Mono', monospace;font-size:13.5px;line-height:18px;font-weight:400;color:#d4d4d4;letter-spacing:-0.39999999999999947px;">= </span>
<span style="left:456.7px;top:531.01px;font-family:'Liberation Mono', monospace;font-size:13.5px;line-height:18px;font-weight:400;color:#9cdcfe;letter-spacing:-0.39999999999999947px;">bmp</span>
<span style="left:479.8px;top:531.01px;font-family:'Liberation Mono', monospace;font-size:13.5px;line-height:18px;font-weight:400;color:#d4d4d4;letter-spacing:-0.39999999999999947px;">.</span>
<span style="left:487.5px;top:531.01px;font-family:'Liberation Mono', monospace;font-size:13.5px;line-height:18px;font-weight:400;color:#dcdcaa;letter-spacing:-0.39999999999999947px;">begin</span>
<span style="left:526.0px;top:531.01px;font-family:'Liberation Mono', monospace;font-size:13.5px;line-height:18px;font-weight:400;color:#da70d6;letter-spacing:-0.39999999999999947px;">(</span>
<span style="left:533.7px;top:531.01px;font-family:'Liberation Mono', monospace;font-size:13.5px;line-height:18px;font-weight:400;color:#b5cea8;letter-spacing:-0.39999999999999947px;">0x76</span>
<span style="left:564.5px;top:531.01px;font-family:'Liberation Mono', monospace;font-size:13.5px;line-height:18px;font-weight:400;color:#da70d6;letter-spacing:-0.39999999999999947px;">)</span>
<span style="left:572.2px;top:531.01px;font-family:'Liberation Mono', monospace;font-size:13.5px;line-height:18px;font-weight:400;color:#d4d4d4;letter-spacing:-0.39999999999999947px;">;</span>
<span style="left:330.6px;top:550.01px;font-family:'Liberation Mono', monospace;font-size:13.5px;line-height:18px;font-weight:400;color:#858585;letter-spacing:-0.39999999999999947px;">25</span>
<span style="left:387.4px;top:550.01px;font-family:'Liberation Mono', monospace;font-size:13.5px;line-height:18px;font-weight:400;color:#c586c0;letter-spacing:-0.39999999999999947px;">if</span>
<span style="left:410.5px;top:550.01px;font-family:'Liberation Mono', monospace;font-size:13.5px;line-height:18px;font-weight:400;color:#da70d6;letter-spacing:-0.39999999999999947px;">(</span>
<span style="left:418.2px;top:550.01px;font-family:'Liberation Mono', monospace;font-size:13.5px;line-height:18px;font-weight:400;color:#d4d4d4;letter-spacing:-0.39999999999999947px;">!</span>
<span style="left:425.9px;top:550.01px;font-family:'Liberation Mono', monospace;font-size:13.5px;line-height:18px;font-weight:400;color:#9cdcfe;letter-spacing:-0.39999999999999947px;">status</span>
<span style="left:472.1px;top:550.01px;font-family:'Liberation Mono', monospace;font-size:13.5px;line-height:18px;font-weight:400;color:#da70d6;letter-spacing:-0.39999999999999947px;">)</span>
<span style="left:487.5px;top:550.01px;font-family:'Liberation Mono', monospace;font-size:13.5px;line-height:18px;font-weight:400;color:#da70d6;letter-spacing:-0.39999999999999947px;">{</span>
<span style="left:330.6px;top:569.01px;font-family:'Liberation Mono', monospace;font-size:13.5px;line-height:18px;font-weight:400;color:#858585;letter-spacing:-0.39999999999999947px;">26</span>
<span style="left:402.8px;top:569.01px;font-family:'Liberation Mono', monospace;font-size:13.5px;line-height:18px;font-weight:400;color:#9cdcfe;letter-spacing:-0.39999999999999947px;">Serial</span>
<span style="left:449.0px;top:569.01px;font-family:'Liberation Mono', monospace;font-size:13.5px;line-height:18px;font-weight:400;color:#d4d4d4;letter-spacing:-0.39999999999999947px;">.</span>
<span style="left:456.7px;top:569.01px;font-family:'Liberation Mono', monospace;font-size:13.5px;line-height:18px;font-weight:400;color:#dcdcaa;letter-spacing:-0.39999999999999947px;">println</span>
<span style="left:510.6px;top:569.01px;font-family:'Liberation Mono', monospace;font-size:13.5px;line-height:18px;font-weight:400;color:#179fff;letter-spacing:-0.39999999999999947px;">(</span>
<span style="left:518.3px;top:569.01px;font-family:'Liberation Mono', monospace;font-size:13.5px;line-height:18px;font-weight:400;color:#569cd6;letter-spacing:-0.39999999999999947px;">F</span>
<span style="left:526.0px;top:569.01px;font-family:'Liberation Mono', monospace;font-size:13.5px;line-height:18px;font-weight:400;color:#ffd700;letter-spacing:-0.39999999999999947px;">(</span>
<span style="left:533.7px;top:569.01px;font-family:'Liberation Mono', monospace;font-size:13.5px;line-height:18px;font-weight:400;color:#ce9178;letter-spacing:-0.39999999999999947px;">&quot;Could not find a valid BMP280 sensor, check wiring or &quot;</span>
<span style="left:330.6px;top:588.01px;font-family:'Liberation Mono', monospace;font-size:13.5px;line-height:18px;font-weight:400;color:#858585;letter-spacing:-0.39999999999999947px;">27</span>
<span style="left:541.4px;top:588.01px;font-family:'Liberation Mono', monospace;font-size:13.5px;line-height:18px;font-weight:400;color:#ce9178;letter-spacing:-0.39999999999999947px;">&quot;try a different address!&quot;</span>
<span style="left:741.6px;top:588.01px;font-family:'Liberation Mono', monospace;font-size:13.5px;line-height:18px;font-weight:400;color:#ffd700;letter-spacing:-0.39999999999999947px;">)</span>
<span style="left:749.3px;top:588.01px;font-family:'Liberation Mono', monospace;font-size:13.5px;line-height:18px;font-weight:400;color:#179fff;letter-spacing:-0.39999999999999947px;">)</span>
<span style="left:757.0px;top:588.01px;font-family:'Liberation Mono', monospace;font-size:13.5px;line-height:18px;font-weight:400;color:#d4d4d4;letter-spacing:-0.39999999999999947px;">;</span>
<span style="left:330.6px;top:607.01px;font-family:'Liberation Mono', monospace;font-size:13.5px;line-height:18px;font-weight:400;color:#858585;letter-spacing:-0.39999999999999947px;">28</span>
<span style="left:402.8px;top:607.01px;font-family:'Liberation Mono', monospace;font-size:13.5px;line-height:18px;font-weight:400;color:#c586c0;letter-spacing:-0.39999999999999947px;">while</span>
<span style="left:449.0px;top:607.01px;font-family:'Liberation Mono', monospace;font-size:13.5px;line-height:18px;font-weight:400;color:#179fff;letter-spacing:-0.39999999999999947px;">(</span>
<span style="left:456.7px;top:607.01px;font-family:'Liberation Mono', monospace;font-size:13.5px;line-height:18px;font-weight:400;color:#b5cea8;letter-spacing:-0.39999999999999947px;">1</span>
<span style="left:464.4px;top:607.01px;font-family:'Liberation Mono', monospace;font-size:13.5px;line-height:18px;font-weight:400;color:#179fff;letter-spacing:-0.39999999999999947px;">)</span>
<span style="left:479.8px;top:607.01px;font-family:'Liberation Mono', monospace;font-size:13.5px;line-height:18px;font-weight:400;color:#dcdcaa;letter-spacing:-0.39999999999999947px;">delay</span>
<span style="left:518.3px;top:607.01px;font-family:'Liberation Mono', monospace;font-size:13.5px;line-height:18px;font-weight:400;color:#179fff;letter-spacing:-0.39999999999999947px;">(</span>
<span style="left:526.0px;top:607.01px;font-family:'Liberation Mono', monospace;font-size:13.5px;line-height:18px;font-weight:400;color:#b5cea8;letter-spacing:-0.39999999999999947px;">10</span>
<span style="left:541.4px;top:607.01px;font-family:'Liberation Mono', monospace;font-size:13.5px;line-height:18px;font-weight:400;color:#179fff;letter-spacing:-0.39999999999999947px;">)</span>
<span style="left:549.1px;top:607.01px;font-family:'Liberation Mono', monospace;font-size:13.5px;line-height:18px;font-weight:400;color:#d4d4d4;letter-spacing:-0.39999999999999947px;">;</span>
<span style="left:330.6px;top:626.01px;font-family:'Liberation Mono', monospace;font-size:13.5px;line-height:18px;font-weight:400;color:#858585;letter-spacing:-0.39999999999999947px;">29</span>
<span style="left:387.4px;top:626.01px;font-family:'Liberation Mono', monospace;font-size:13.5px;line-height:18px;font-weight:400;color:#da70d6;letter-spacing:-0.39999999999999947px;">}</span>
<span style="left:330.6px;top:645.01px;font-family:'Liberation Mono', monospace;font-size:13.5px;line-height:18px;font-weight:400;color:#858585;letter-spacing:-0.39999999999999947px;">30</span>
<span style="left:372.0px;top:645.01px;font-family:'Liberation Mono', monospace;font-size:13.5px;line-height:18px;font-weight:400;color:#ffd700;letter-spacing:-0.39999999999999947px;">}</span>
<span style="left:330.6px;top:664.01px;font-family:'Liberation Mono', monospace;font-size:13.5px;line-height:18px;font-weight:400;color:#c6c6c6;letter-spacing:-0.39999999999999947px;">31</span>
<span style="left:330.6px;top:683.01px;font-family:'Liberation Mono', monospace;font-size:13.5px;line-height:18px;font-weight:400;color:#858585;letter-spacing:-0.39999999999999947px;">32</span>
<span style="left:372.0px;top:683.01px;font-family:'Liberation Mono', monospace;font-size:13.5px;line-height:18px;font-weight:400;color:#6a9955;letter-spacing:-0.39999999999999947px;">//In loop, every piece of code will be run again</span>
<span style="left:330.6px;top:702.01px;font-family:'Liberation Mono', monospace;font-size:13.5px;line-height:18px;font-weight:400;color:#858585;letter-spacing:-0.39999999999999947px;">33</span>
<span style="left:372.0px;top:702.01px;font-family:'Liberation Mono', monospace;font-size:13.5px;line-height:18px;font-weight:400;color:#6a9955;letter-spacing:-0.39999999999999947px;">//There are 4 pieces of multiple print functions</span>
<span style="left:330.6px;top:721.01px;font-family:'Liberation Mono', monospace;font-size:13.5px;line-height:18px;font-weight:400;color:#858585;letter-spacing:-0.39999999999999947px;">34</span>
<span style="left:372.0px;top:721.01px;font-family:'Liberation Mono', monospace;font-size:13.5px;line-height:18px;font-weight:400;color:#569cd6;letter-spacing:-0.39999999999999947px;">void</span>
<span style="left:410.5px;top:721.01px;font-family:'Liberation Mono', monospace;font-size:13.5px;line-height:18px;font-weight:400;color:#dcdcaa;letter-spacing:-0.39999999999999947px;">loop</span>
<span style="left:441.3px;top:721.01px;font-family:'Liberation Mono', monospace;font-size:13.5px;line-height:18px;font-weight:400;color:#ffd700;letter-spacing:-0.39999999999999947px;">()</span>
<span style="left:464.4px;top:721.01px;font-family:'Liberation Mono', monospace;font-size:13.5px;line-height:18px;font-weight:400;color:#ffd700;letter-spacing:-0.39999999999999947px;">{</span>
<div style="left:1794.0px;top:92px;width:7.0px;height:1px;background:#6a9955;opacity:0.5"></div>
<div style="left:1802.0px;top:92px;width:3.0px;height:1px;background:#6a9955;opacity:0.5"></div>
<div style="left:1806.0px;top:92px;width:5.0px;height:1px;background:#6a9955;opacity:0.5"></div>
<div style="left:1812.0px;top:92px;width:2.0px;height:1px;background:#6a9955;opacity:0.5"></div>
<div style="left:1815.0px;top:92px;width:4.0px;height:1px;background:#6a9955;opacity:0.5"></div>
<div style="left:1820.0px;top:92px;width:6.0px;height:1px;background:#6a9955;opacity:0.5"></div>
<div style="left:1827.0px;top:92px;width:3.0px;height:1px;background:#6a9955;opacity:0.5"></div>
<div style="left:1831.0px;top:92px;width:6.0px;height:1px;background:#6a9955;opacity:0.5"></div>
<div style="left:1838.0px;top:92px;width:10.0px;height:1px;background:#6a9955;opacity:0.5"></div>
<div style="left:1794.0px;top:94px;width:5.0px;height:1px;background:#6a9955;opacity:0.5"></div>
<div style="left:1800.0px;top:94px;width:4.0px;height:1px;background:#6a9955;opacity:0.5"></div>
<div style="left:1805.0px;top:94px;width:7.0px;height:1px;background:#6a9955;opacity:0.5"></div>
<div style="left:1813.0px;top:94px;width:2.0px;height:1px;background:#6a9955;opacity:0.5"></div>
<div style="left:1816.0px;top:94px;width:6.0px;height:1px;background:#6a9955;opacity:0.5"></div>
<div style="left:1823.0px;top:94px;width:2.0px;height:1px;background:#6a9955;opacity:0.5"></div>
<div style="left:1826.0px;top:94px;width:3.0px;height:1px;background:#6a9955;opacity:0.5"></div>
<div style="left:1830.0px;top:94px;width:4.0px;height:1px;background:#6a9955;opacity:0.5"></div>
<div style="left:1794.0px;top:96px;width:8.0px;height:1px;background:#c586c0;opacity:0.5"></div>
<div style="left:1803.0px;top:96px;width:8.0px;height:1px;background:#ce9178;opacity:0.5"></div>
<div style="left:1794.0px;top:98px;width:8.0px;height:1px;background:#c586c0;opacity:0.5"></div>
<div style="left:1803.0px;top:98px;width:7.0px;height:1px;background:#ce9178;opacity:0.5"></div>
<div style="left:1794.0px;top:100px;width:8.0px;height:1px;background:#c586c0;opacity:0.5"></div>
<div style="left:1803.0px;top:100px;width:19.0px;height:1px;background:#ce9178;opacity:0.5"></div>
<div style="left:1794.0px;top:102px;width:8.0px;height:1px;background:#c586c0;opacity:0.5"></div>
<div style="left:1803.0px;top:102px;width:10.0px;height:1px;background:#ce9178;opacity:0.5"></div>
<div style="left:1794.0px;top:104px;width:8.0px;height:1px;background:#c586c0;opacity:0.5"></div>
<div style="left:1803.0px;top:104px;width:18.0px;height:1px;background:#ce9178;opacity:0.5"></div>
<div style="left:1794.0px;top:106px;width:8.0px;height:1px;background:#c586c0;opacity:0.5"></div>
<div style="left:1803.0px;top:106px;width:17.0px;height:1px;background:#ce9178;opacity:0.5"></div>
<div style="left:1794.0px;top:110px;width:3.0px;height:1px;background:#6a9955;opacity:0.5"></div>
<div style="left:1798.0px;top:110px;width:7.0px;height:1px;background:#6a9955;opacity:0.5"></div>
<div style="left:1806.0px;top:110px;width:3.0px;height:1px;background:#6a9955;opacity:0.5"></div>
<div style="left:1810.0px;top:110px;width:7.0px;height:1px;background:#6a9955;opacity:0.5"></div>
<div style="left:1818.0px;top:110px;width:5.0px;height:1px;background:#6a9955;opacity:0.5"></div>
<div style="left:1824.0px;top:110px;width:3.0px;height:1px;background:#6a9955;opacity:0.5"></div>
<div style="left:1828.0px;top:110px;width:3.0px;height:1px;background:#6a9955;opacity:0.5"></div>
<div style="left:1832.0px;top:110px;width:11.0px;height:1px;background:#6a9955;opacity:0.5"></div>
<div style="left:1794.0px;top:112px;width:15.0px;height:1px;background:#4ec9b0;opacity:0.5"></div>
<div style="left:1810.0px;top:112px;width:3.0px;height:1px;background:#9cdcfe;opacity:0.5"></div>
<div style="left:1813.0px;top:112px;width:1.0px;height:1px;background:#d4d4d4;opacity:0.5"></div>
<div style="left:1794.0px;top:114px;width:6.0px;height:1px;background:#4ec9b0;opacity:0.5"></div>
<div style="left:1801.0px;top:114px;width:10.0px;height:1px;background:#9cdcfe;opacity:0.5"></div>
<div style="left:1811.0px;top:114px;width:1.0px;height:1px;background:#d4d4d4;opacity:0.5"></div>
<div style="left:1794.0px;top:118px;width:4.0px;height:1px;background:#569cd6;opacity:0.5"></div>
<div style="left:1799.0px;top:118px;width:5.0px;height:1px;background:#dcdcaa;opacity:0.5"></div>
<div style="left:1804.0px;top:118px;width:2.0px;height:1px;background:#ffd700;opacity:0.5"></div>
<div style="left:1807.0px;top:118px;width:1.0px;height:1px;background:#ffd700;opacity:0.5"></div>
<div style="left:1796.0px;top:120px;width:4.0px;height:1px;background:#6a9955;opacity:0.5"></div>
<div style="left:1801.0px;top:120px;width:6.0px;height:1px;background:#6a9955;opacity:0.5"></div>
<div style="left:1808.0px;top:120px;width:5.0px;height:1px;background:#6a9955;opacity:0.5"></div>
<div style="left:1814.0px;top:120px;width:1.0px;height:1px;background:#6a9955;opacity:0.5"></div>
<div style="left:1816.0px;top:120px;width:6.0px;height:1px;background:#6a9955;opacity:0.5"></div>
<div style="left:1823.0px;top:120px;width:13.0px;height:1px;background:#6a9955;opacity:0.5"></div>
<div style="left:1837.0px;top:120px;width:2.0px;height:1px;background:#6a9955;opacity:0.5"></div>
<div style="left:1840.0px;top:120px;width:7.0px;height:1px;background:#6a9955;opacity:0.5"></div>
<div style="left:1796.0px;top:122px;width:6.0px;height:1px;background:#9cdcfe;opacity:0.5"></div>
<div style="left:1802.0px;top:122px;width:1.0px;height:1px;background:#d4d4d4;opacity:0.5"></div>
<div style="left:1803.0px;top:122px;width:5.0px;height:1px;background:#dcdcaa;opacity:0.5"></div>
<div style="left:1808.0px;top:122px;width:1.0px;height:1px;background:#da70d6;opacity:0.5"></div>
<div style="left:1809.0px;top:122px;width:4.0px;height:1px;background:#b5cea8;opacity:0.5"></div>
<div style="left:1813.0px;top:122px;width:1.0px;height:1px;background:#da70d6;opacity:0.5"></div>
<div style="left:1814.0px;top:122px;width:1.0px;height:1px;background:#d4d4d4;opacity:0.5"></div>
<div style="left:1796.0px;top:124px;width:5.0px;height:1px;background:#c586c0;opacity:0.5"></div>
<div style="left:1802.0px;top:124px;width:1.0px;height:1px;background:#da70d6;opacity:0.5"></div>
<div style="left:1804.0px;top:124px;width:1.0px;height:1px;background:#d4d4d4;opacity:0.5"></div>
<div style="left:1805.0px;top:124px;width:6.0px;height:1px;background:#9cdcfe;opacity:0.5"></div>
<div style="left:1812.0px;top:124px;width:1.0px;height:1px;background:#da70d6;opacity:0.5"></div>
<div style="left:1814.0px;top:124px;width:5.0px;height:1px;background:#dcdcaa;opacity:0.5"></div>
<div style="left:1819.0px;top:124px;width:1.0px;height:1px;background:#da70d6;opacity:0.5"></div>
<div style="left:1820.0px;top:124px;width:3.0px;height:1px;background:#b5cea8;opacity:0.5"></div>
<div style="left:1823.0px;top:124px;width:1.0px;height:1px;background:#da70d6;opacity:0.5"></div>
<div style="left:1824.0px;top:124px;width:1.0px;height:1px;background:#d4d4d4;opacity:0.5"></div>
<div style="left:1796.0px;top:126px;width:6.0px;height:1px;background:#6a9955;opacity:0.5"></div>
<div style="left:1803.0px;top:126px;width:4.0px;height:1px;background:#6a9955;opacity:0.5"></div>
<div style="left:1808.0px;top:126px;width:3.0px;height:1px;background:#6a9955;opacity:0.5"></div>
<div style="left:1812.0px;top:126px;width:3.0px;height:1px;background:#6a9955;opacity:0.5"></div>
<div style="left:1816.0px;top:126px;width:10.0px;height:1px;background:#6a9955;opacity:0.5"></div>
<div style="left:1827.0px;top:126px;width:3.0px;height:1px;background:#6a9955;opacity:0.5"></div>
<div style="left:1831.0px;top:126px;width:7.0px;height:1px;background:#6a9955;opacity:0.5"></div>
<div style="left:1796.0px;top:128px;width:4.0px;height:1px;background:#9cdcfe;opacity:0.5"></div>
<div style="left:1800.0px;top:128px;width:1.0px;height:1px;background:#d4d4d4;opacity:0.5"></div>
<div style="left:1801.0px;top:128px;width:5.0px;height:1px;background:#dcdcaa;opacity:0.5"></div>
<div style="left:1806.0px;top:128px;width:2.0px;height:1px;background:#da70d6;opacity:0.5"></div>
<div style="left:1808.0px;top:128px;width:1.0px;height:1px;background:#d4d4d4;opacity:0.5"></div>
<div style="left:1796.0px;top:130px;width:10.0px;height:1px;background:#9cdcfe;opacity:0.5"></div>
<div style="left:1806.0px;top:130px;width:1.0px;height:1px;background:#d4d4d4;opacity:0.5"></div>
<div style="left:1807.0px;top:130px;width:5.0px;height:1px;background:#dcdcaa;opacity:0.5"></div>
<div style="left:1812.0px;top:130px;width:2.0px;height:1px;background:#da70d6;opacity:0.5"></div>
<div style="left:1814.0px;top:130px;width:1.0px;height:1px;background:#d4d4d4;opacity:0.5"></div>
<div style="left:1796.0px;top:134px;width:8.0px;height:1px;background:#6a9955;opacity:0.5"></div>
<div style="left:1805.0px;top:134px;width:2.0px;height:1px;background:#6a9955;opacity:0.5"></div>
<div style="left:1808.0px;top:134px;width:7.0px;height:1px;background:#6a9955;opacity:0.5"></div>
<div style="left:1816.0px;top:134px;width:4.0px;height:1px;background:#6a9955;opacity:0.5"></div>
<div style="left:1821.0px;top:134px;width:4.0px;height:1px;background:#6a9955;opacity:0.5"></div>
<div style="left:1826.0px;top:134px;width:8.0px;height:1px;background:#6a9955;opacity:0.5"></div>
<div style="left:1835.0px;top:134px;width:7.0px;height:1px;background:#6a9955;opacity:0.5"></div>
<div style="left:1843.0px;top:134px;width:7.0px;height:1px;background:#6a9955;opacity:0.5"></div>
<div style="left:1851.0px;top:134px;width:2.0px;height:1px;background:#6a9955;opacity:0.5"></div>
<div style="left:1854.0px;top:134px;width:3.0px;height:1px;background:#6a9955;opacity:0.5"></div>
<div style="left:1858.0px;top:134px;width:6.0px;height:1px;background:#6a9955;opacity:0.5"></div>
<div style="left:1865.0px;top:134px;width:2.0px;height:1px;background:#6a9955;opacity:0.5"></div>
<div style="left:1868.0px;top:134px;width:3.0px;height:1px;background:#6a9955;opacity:0.5"></div>
<div style="left:1872.0px;top:134px;width:6.0px;height:1px;background:#6a9955;opacity:0.5"></div>
<div style="left:1879.0px;top:134px;width:1.0px;height:1px;background:#6a9955;opacity:0.5"></div>
<div style="left:1881.0px;top:134px;width:7.0px;height:1px;background:#6a9955;opacity:0.5"></div>
<div style="left:1889.0px;top:134px;width:4.0px;height:1px;background:#6a9955;opacity:0.5"></div>
<div style="left:1894.0px;top:134px;width:2.0px;height:1px;background:#6a9955;opacity:0.5"></div>
<div style="left:1897.0px;top:134px;width:9.0px;height:1px;background:#6a9955;opacity:0.5"></div>
<div style="left:1796.0px;top:136px;width:8.0px;height:1px;background:#569cd6;opacity:0.5"></div>
<div style="left:1805.0px;top:136px;width:6.0px;height:1px;background:#9cdcfe;opacity:0.5"></div>
<div style="left:1811.0px;top:136px;width:1.0px;height:1px;background:#d4d4d4;opacity:0.5"></div>
<div style="left:1796.0px;top:138px;width:6.0px;height:1px;background:#9cdcfe;opacity:0.5"></div>
<div style="left:1803.0px;top:138px;width:1.0px;height:1px;background:#d4d4d4;opacity:0.5"></div>
<div style="left:1805.0px;top:138px;width:3.0px;height:1px;background:#9cdcfe;opacity:0.5"></div>
<div style="left:1808.0px;top:138px;width:1.0px;height:1px;background:#d4d4d4;opacity:0.5"></div>
<div style="left:1809.0px;top:138px;width:5.0px;height:1px;background:#dcdcaa;opacity:0.5"></div>
<div style="left:1814.0px;top:138px;width:1.0px;height:1px;background:#da70d6;opacity:0.5"></div>
<div style="left:1815.0px;top:138px;width:4.0px;height:1px;background:#b5cea8;opacity:0.5"></div>
<div style="left:1819.0px;top:138px;width:1.0px;height:1px;background:#da70d6;opacity:0.5"></div>
<div style="left:1820.0px;top:138px;width:1.0px;height:1px;background:#d4d4d4;opacity:0.5"></div>
<div style="left:1796.0px;top:140px;width:2.0px;height:1px;background:#c586c0;opacity:0.5"></div>
<div style="left:1799.0px;top:140px;width:1.0px;height:1px;background:#da70d6;opacity:0.5"></div>
<div style="left:1800.0px;top:140px;width:1.0px;height:1px;background:#d4d4d4;opacity:0.5"></div>
<div style="left:1801.0px;top:140px;width:6.0px;height:1px;background:#9cdcfe;opacity:0.5"></div>
<div style="left:1807.0px;top:140px;width:1.0px;height:1px;background:#da70d6;opacity:0.5"></div>
<div style="left:1809.0px;top:140px;width:1.0px;height:1px;background:#da70d6;opacity:0.5"></div>
<div style="left:1798.0px;top:142px;width:6.0px;height:1px;background:#9cdcfe;opacity:0.5"></div>
<div style="left:1804.0px;top:142px;width:1.0px;height:1px;background:#d4d4d4;opacity:0.5"></div>
<div style="left:1805.0px;top:142px;width:7.0px;height:1px;background:#dcdcaa;opacity:0.5"></div>
<div style="left:1812.0px;top:142px;width:1.0px;height:1px;background:#179fff;opacity:0.5"></div>
<div style="left:1813.0px;top:142px;width:1.0px;height:1px;background:#569cd6;opacity:0.5"></div>
<div style="left:1814.0px;top:142px;width:1.0px;height:1px;background:#ffd700;opacity:0.5"></div>
<div style="left:1815.0px;top:142px;width:6.0px;height:1px;background:#ce9178;opacity:0.5"></div>
<div style="left:1822.0px;top:142px;width:3.0px;height:1px;background:#ce9178;opacity:0.5"></div>
<div style="left:1826.0px;top:142px;width:4.0px;height:1px;background:#ce9178;opacity:0.5"></div>
<div style="left:1831.0px;top:142px;width:1.0px;height:1px;background:#ce9178;opacity:0.5"></div>
<div style="left:1833.0px;top:142px;width:5.0px;height:1px;background:#ce9178;opacity:0.5"></div>
<div style="left:1839.0px;top:142px;width:6.0px;height:1px;background:#ce9178;opacity:0.5"></div>
<div style="left:1846.0px;top:142px;width:7.0px;height:1px;background:#ce9178;opacity:0.5"></div>
<div style="left:1854.0px;top:142px;width:5.0px;height:1px;background:#ce9178;opacity:0.5"></div>
<div style="left:1860.0px;top:142px;width:6.0px;height:1px;background:#ce9178;opacity:0.5"></div>
<div style="left:1867.0px;top:142px;width:2.0px;height:1px;background:#ce9178;opacity:0.5"></div>
<div style="left:1870.0px;top:142px;width:1.0px;height:1px;background:#ce9178;opacity:0.5"></div>
<div style="left:1816.0px;top:144px;width:4.0px;height:1px;background:#ce9178;opacity:0.5"></div>
<div style="left:1821.0px;top:144px;width:1.0px;height:1px;background:#ce9178;opacity:0.5"></div>
<div style="left:1823.0px;top:144px;width:9.0px;height:1px;background:#ce9178;opacity:0.5"></div>
<div style="left:1833.0px;top:144px;width:9.0px;height:1px;background:#ce9178;opacity:0.5"></div>
<div style="left:1842.0px;top:144px;width:1.0px;height:1px;background:#ffd700;opacity:0.5"></div>
<div style="left:1843.0px;top:144px;width:1.0px;height:1px;background:#179fff;opacity:0.5"></div>
<div style="left:1844.0px;top:144px;width:1.0px;height:1px;background:#d4d4d4;opacity:0.5"></div>
<div style="left:1798.0px;top:146px;width:5.0px;height:1px;background:#c586c0;opacity:0.5"></div>
<div style="left:1804.0px;top:146px;width:1.0px;height:1px;background:#179fff;opacity:0.5"></div>
<div style="left:1805.0px;top:146px;width:1.0px;height:1px;background:#b5cea8;opacity:0.5"></div>
<div style="left:1806.0px;top:146px;width:1.0px;height:1px;background:#179fff;opacity:0.5"></div>
<div style="left:1808.0px;top:146px;width:5.0px;height:1px;background:#dcdcaa;opacity:0.5"></div>
<div style="left:1813.0px;top:146px;width:1.0px;height:1px;background:#179fff;opacity:0.5"></div>
<div style="left:1814.0px;top:146px;width:2.0px;height:1px;background:#b5cea8;opacity:0.5"></div>
<div style="left:1816.0px;top:146px;width:1.0px;height:1px;background:#179fff;opacity:0.5"></div>
<div style="left:1817.0px;top:146px;width:1.0px;height:1px;background:#d4d4d4;opacity:0.5"></div>
<div style="left:1796.0px;top:148px;width:1.0px;height:1px;background:#da70d6;opacity:0.5"></div>
<div style="left:1794.0px;top:150px;width:1.0px;height:1px;background:#ffd700;opacity:0.5"></div>
<div style="left:1794.0px;top:154px;width:4.0px;height:1px;background:#6a9955;opacity:0.5"></div>
<div style="left:1799.0px;top:154px;width:5.0px;height:1px;background:#6a9955;opacity:0.5"></div>
<div style="left:1805.0px;top:154px;width:5.0px;height:1px;background:#6a9955;opacity:0.5"></div>
<div style="left:1811.0px;top:154px;width:5.0px;height:1px;background:#6a9955;opacity:0.5"></div>
<div style="left:1817.0px;top:154px;width:2.0px;height:1px;background:#6a9955;opacity:0.5"></div>
<div style="left:1820.0px;top:154px;width:4.0px;height:1px;background:#6a9955;opacity:0.5"></div>
<div style="left:1825.0px;top:154px;width:4.0px;height:1px;background:#6a9955;opacity:0.5"></div>
<div style="left:1830.0px;top:154px;width:2.0px;height:1px;background:#6a9955;opacity:0.5"></div>
<div style="left:1833.0px;top:154px;width:3.0px;height:1px;background:#6a9955;opacity:0.5"></div>
<div style="left:1837.0px;top:154px;width:5.0px;height:1px;background:#6a9955;opacity:0.5"></div>
<div style="left:1794.0px;top:156px;width:7.0px;height:1px;background:#6a9955;opacity:0.5"></div>
<div style="left:1802.0px;top:156px;width:3.0px;height:1px;background:#6a9955;opacity:0.5"></div>
<div style="left:1806.0px;top:156px;width:1.0px;height:1px;background:#6a9955;opacity:0.5"></div>
<div style="left:1808.0px;top:156px;width:6.0px;height:1px;background:#6a9955;opacity:0.5"></div>
<div style="left:1815.0px;top:156px;width:2.0px;height:1px;background:#6a9955;opacity:0.5"></div>
<div style="left:1818.0px;top:156px;width:8.0px;height:1px;background:#6a9955;opacity:0.5"></div>
<div style="left:1827.0px;top:156px;width:5.0px;height:1px;background:#6a9955;opacity:0.5"></div>
<div style="left:1833.0px;top:156px;width:9.0px;height:1px;background:#6a9955;opacity:0.5"></div>
<div style="left:1794.0px;top:158px;width:4.0px;height:1px;background:#569cd6;opacity:0.5"></div>
<div style="left:1799.0px;top:158px;width:4.0px;height:1px;background:#dcdcaa;opacity:0.5"></div>
<div style="left:1803.0px;top:158px;width:2.0px;height:1px;background:#ffd700;opacity:0.5"></div>
<div style="left:1806.0px;top:158px;width:1.0px;height:1px;background:#ffd700;opacity:0.5"></div>
<div style="left:1796.0px;top:160px;width:4.0px;height:1px;background:#6a9955;opacity:0.5"></div>
<div style="left:1801.0px;top:160px;width:5.0px;height:1px;background:#6a9955;opacity:0.5"></div>
<div style="left:1807.0px;top:160px;width:5.0px;height:1px;background:#6a9955;opacity:0.5"></div>
<div style="left:1813.0px;top:160px;width:5.0px;height:1px;background:#6a9955;opacity:0.5"></div>
<div style="left:1819.0px;top:160px;width:2.0px;height:1px;background:#6a9955;opacity:0.5"></div>
<div style="left:1822.0px;top:160px;width:4.0px;height:1px;background:#6a9955;opacity:0.5"></div>
<div style="left:1827.0px;top:160px;width:4.0px;height:1px;background:#6a9955;opacity:0.5"></div>
<div style="left:1832.0px;top:160px;width:2.0px;height:1px;background:#6a9955;opacity:0.5"></div>
<div style="left:1835.0px;top:160px;width:3.0px;height:1px;background:#6a9955;opacity:0.5"></div>
<div style="left:1839.0px;top:160px;width:6.0px;height:1px;background:#6a9955;opacity:0.5"></div>
<div style="left:1846.0px;top:160px;width:3.0px;height:1px;background:#6a9955;opacity:0.5"></div>
<div style="left:1850.0px;top:160px;width:3.0px;height:1px;background:#6a9955;opacity:0.5"></div>
<div style="left:1854.0px;top:160px;width:3.0px;height:1px;background:#6a9955;opacity:0.5"></div>
<div style="left:1858.0px;top:160px;width:7.0px;height:1px;background:#6a9955;opacity:0.5"></div>
<div style="left:1866.0px;top:160px;width:6.0px;height:1px;background:#6a9955;opacity:0.5"></div>
<div style="left:1873.0px;top:160px;width:3.0px;height:1px;background:#6a9955;opacity:0.5"></div>
<div style="left:1877.0px;top:160px;width:9.0px;height:1px;background:#6a9955;opacity:0.5"></div>
<div style="left:1887.0px;top:160px;width:2.0px;height:1px;background:#6a9955;opacity:0.5"></div>
<div style="left:1890.0px;top:160px;width:3.0px;height:1px;background:#6a9955;opacity:0.5"></div>
<div style="left:1894.0px;top:160px;width:6.0px;height:1px;background:#6a9955;opacity:0.5"></div>
<div style="left:1901.0px;top:160px;width:5.0px;height:1px;background:#6a9955;opacity:0.5"></div>
<div style="left:1796.0px;top:162px;width:6.0px;height:1px;background:#9cdcfe;opacity:0.5"></div>
<div style="left:1802.0px;top:162px;width:6.0px;height:1px;background:#dcdcaa;opacity:0.5"></div>
<div style="left:1808.0px;top:162px;width:15.0px;height:1px;background:#ce9178;opacity:0.5"></div>
<div style="left:1824.0px;top:162px;width:1.0px;height:1px;background:#ce9178;opacity:0.5"></div>
<div style="left:1826.0px;top:162px;width:4.0px;height:1px;background:#ce9178;opacity:0.5"></div>
<div style="left:1796.0px;top:164px;width:6.0px;height:1px;background:#9cdcfe;opacity:0.5"></div>
<div style="left:1802.0px;top:164px;width:6.0px;height:1px;background:#dcdcaa;opacity:0.5"></div>
<div style="left:1808.0px;top:164px;width:24.0px;height:1px;background:#9cdcfe;opacity:0.5"></div>
<div style="left:1796.0px;top:166px;width:6.0px;height:1px;background:#9cdcfe;opacity:0.5"></div>
<div style="left:1802.0px;top:166px;width:8.0px;height:1px;background:#dcdcaa;opacity:0.5"></div>
<div style="left:1810.0px;top:166px;width:4.0px;height:1px;background:#ce9178;opacity:0.5"></div>
<div style="left:1815.0px;top:166px;width:6.0px;height:1px;background:#ce9178;opacity:0.5"></div>
<div style="left:1796.0px;top:170px;width:6.0px;height:1px;background:#9cdcfe;opacity:0.5"></div>
<div style="left:1802.0px;top:170px;width:6.0px;height:1px;background:#dcdcaa;opacity:0.5"></div>
<div style="left:1808.0px;top:170px;width:12.0px;height:1px;background:#ce9178;opacity:0.5"></div>
<div style="left:1821.0px;top:170px;width:1.0px;height:1px;background:#ce9178;opacity:0.5"></div>
<div style="left:1823.0px;top:170px;width:4.0px;height:1px;background:#ce9178;opacity:0.5"></div>
<div style="left:1796.0px;top:172px;width:6.0px;height:1px;background:#9cdcfe;opacity:0.5"></div>
<div style="left:1802.0px;top:172px;width:6.0px;height:1px;background:#dcdcaa;opacity:0.5"></div>
<div style="left:1808.0px;top:172px;width:25.0px;height:1px;background:#9cdcfe;opacity:0.5"></div>
<div style="left:1796.0px;top:174px;width:6.0px;height:1px;background:#9cdcfe;opacity:0.5"></div>
<div style="left:1802.0px;top:174px;width:8.0px;height:1px;background:#dcdcaa;opacity:0.5"></div>
<div style="left:1810.0px;top:174px;width:4.0px;height:1px;background:#ce9178;opacity:0.5"></div>
<div style="left:1815.0px;top:174px;width:7.0px;height:1px;background:#ce9178;opacity:0.5"></div>
<div style="left:1796.0px;top:178px;width:6.0px;height:1px;background:#9cdcfe;opacity:0.5"></div>
<div style="left:1802.0px;top:178px;width:6.0px;height:1px;background:#dcdcaa;opacity:0.5"></div>
<div style="left:1808.0px;top:178px;width:12.0px;height:1px;background:#ce9178;opacity:0.5"></div>
<div style="left:1821.0px;top:178px;width:1.0px;height:1px;background:#ce9178;opacity:0.5"></div>
<div style="left:1823.0px;top:178px;width:4.0px;height:1px;background:#ce9178;opacity:0.5"></div>
<div style="left:1796.0px;top:180px;width:6.0px;height:1px;background:#9cdcfe;opacity:0.5"></div>
<div style="left:1802.0px;top:180px;width:6.0px;height:1px;background:#dcdcaa;opacity:0.5"></div>
<div style="left:1808.0px;top:180px;width:28.0px;height:1px;background:#9cdcfe;opacity:0.5"></div>
<div style="left:1796.0px;top:182px;width:6.0px;height:1px;background:#9cdcfe;opacity:0.5"></div>
<div style="left:1802.0px;top:182px;width:8.0px;height:1px;background:#dcdcaa;opacity:0.5"></div>
<div style="left:1810.0px;top:182px;width:4.0px;height:1px;background:#ce9178;opacity:0.5"></div>
<div style="left:1815.0px;top:182px;width:5.0px;height:1px;background:#ce9178;opacity:0.5"></div>
<div style="left:1796.0px;top:186px;width:6.0px;height:1px;background:#9cdcfe;opacity:0.5"></div>
<div style="left:1802.0px;top:186px;width:6.0px;height:1px;background:#dcdcaa;opacity:0.5"></div>
<div style="left:1808.0px;top:186px;width:7.0px;height:1px;background:#ce9178;opacity:0.5"></div>
<div style="left:1816.0px;top:186px;width:1.0px;height:1px;background:#ce9178;opacity:0.5"></div>
<div style="left:1818.0px;top:186px;width:3.0px;height:1px;background:#ce9178;opacity:0.5"></div>
<div style="left:1796.0px;top:188px;width:6.0px;height:1px;background:#9cdcfe;opacity:0.5"></div>
<div style="left:1802.0px;top:188px;width:6.0px;height:1px;background:#dcdcaa;opacity:0.5"></div>
<div style="left:1808.0px;top:188px;width:30.0px;height:1px;background:#9cdcfe;opacity:0.5"></div>
<div style="left:1796.0px;top:190px;width:6.0px;height:1px;background:#9cdcfe;opacity:0.5"></div>
<div style="left:1802.0px;top:190px;width:8.0px;height:1px;background:#dcdcaa;opacity:0.5"></div>
<div style="left:1810.0px;top:190px;width:2.0px;height:1px;background:#ce9178;opacity:0.5"></div>
<div style="left:1813.0px;top:190px;width:6.0px;height:1px;background:#ce9178;opacity:0.5"></div>
<div style="left:1796.0px;top:192px;width:6.0px;height:1px;background:#9cdcfe;opacity:0.5"></div>
<div style="left:1802.0px;top:192px;width:8.0px;height:1px;background:#dcdcaa;opacity:0.5"></div>
<div style="left:1810.0px;top:192px;width:3.0px;height:1px;background:#da70d6;opacity:0.5"></div>
<div style="left:1796.0px;top:194px;width:7.0px;height:1px;background:#6a9955;opacity:0.5"></div>
<div style="left:1804.0px;top:194px;width:2.0px;height:1px;background:#6a9955;opacity:0.5"></div>
<div style="left:1807.0px;top:194px;width:4.0px;height:1px;background:#6a9955;opacity:0.5"></div>
<div style="left:1812.0px;top:194px;width:2.0px;height:1px;background:#6a9955;opacity:0.5"></div>
<div style="left:1815.0px;top:194px;width:4.0px;height:1px;background:#6a9955;opacity:0.5"></div>
<div style="left:1820.0px;top:194px;width:1.0px;height:1px;background:#6a9955;opacity:0.5"></div>
<div style="left:1822.0px;top:194px;width:6.0px;height:1px;background:#6a9955;opacity:0.5"></div>
<div style="left:1829.0px;top:194px;width:2.0px;height:1px;background:#6a9955;opacity:0.5"></div>
<div style="left:1832.0px;top:194px;width:2.0px;height:1px;background:#6a9955;opacity:0.5"></div>
<div style="left:1835.0px;top:194px;width:7.0px;height:1px;background:#6a9955;opacity:0.5"></div>
<div style="left:1843.0px;top:194px;width:6.0px;height:1px;background:#6a9955;opacity:0.5"></div>
<div style="left:1850.0px;top:194px;width:3.0px;height:1px;background:#6a9955;opacity:0.5"></div>
<div style="left:1854.0px;top:194px;width:4.0px;height:1px;background:#6a9955;opacity:0.5"></div>
<div style="left:1859.0px;top:194px;width:2.0px;height:1px;background:#6a9955;opacity:0.5"></div>
<div style="left:1862.0px;top:194px;width:6.0px;height:1px;background:#6a9955;opacity:0.5"></div>
<div style="left:1869.0px;top:194px;width:5.0px;height:1px;background:#6a9955;opacity:0.5"></div>
<div style="left:1875.0px;top:194px;width:3.0px;height:1px;background:#6a9955;opacity:0.5"></div>
<div style="left:1879.0px;top:194px;width:3.0px;height:1px;background:#6a9955;opacity:0.5"></div>
<div style="left:1883.0px;top:194px;width:6.0px;height:1px;background:#6a9955;opacity:0.5"></div>
<div style="left:1890.0px;top:194px;width:9.0px;height:1px;background:#6a9955;opacity:0.5"></div>
<div style="left:1900.0px;top:194px;width:5.0px;height:1px;background:#6a9955;opacity:0.5"></div>
<div style="left:1796.0px;top:196px;width:5.0px;height:1px;background:#dcdcaa;opacity:0.5"></div>
<div style="left:1801.0px;top:196px;width:7.0px;height:1px;background:#b5cea8;opacity:0.5"></div>
<div style="left:1794.0px;top:198px;width:1.0px;height:1px;background:#ffd700;opacity:0.5"></div>
<div style="left:1794px;top:152px;width:112px;height:2px;background:#264f78;opacity:0.9"></div>
<div style="left:1906px;top:91px;width:1px;height:644px;background:#333333;"></div>
<div style="left:1907px;top:308px;width:12px;height:2px;background:#7a7a7a;"></div>
<div style="left:304px;top:735px;width:1615px;height:275px;background:#1e1e1e;"></div>
<div style="left:304px;top:735px;width:1615px;height:1px;background:#414141;"></div>
<span style="left:324.3px;top:747.19px;font-family:'Liberation Sans', sans-serif;font-size:11px;line-height:14px;font-weight:400;color:#a0a0a0;letter-spacing:0px;transform:scaleX(0.8783);">PROBLEMS</span>
<span style="left:401.8px;top:747.19px;font-family:'Liberation Sans', sans-serif;font-size:11px;line-height:14px;font-weight:400;color:#a0a0a0;letter-spacing:0px;transform:scaleX(0.8953);">OUTPUT</span>
<span style="left:467px;top:747.19px;font-family:'Liberation Sans', sans-serif;font-size:11px;line-height:14px;font-weight:400;color:#a0a0a0;letter-spacing:0px;transform:scaleX(0.8836);">DEBUG CONSOLE</span>
<span style="left:577px;top:747.19px;font-family:'Liberation Sans', sans-serif;font-size:11px;line-height:14px;font-weight:400;color:#e7e7e7;letter-spacing:0px;transform:scaleX(0.9079);">TERMINAL</span>
<div style="left:574px;top:766px;width:56px;height:1px;background:#e7e7e7;"></div>
<svg style="left:1832px;top:746px;width:14px;height:14px;" viewBox="0 0 14 14"><path d="M7 0.5 V13.5 M0.5 7 H13.5" stroke="#c5c5c5" stroke-width="1.3"/></svg>
<svg style="left:1852px;top:750px;width:9px;height:6px;" viewBox="0 0 9 6"><path d="M0.8 0.8 L4.5 4.5 L8.2 0.8" stroke="#c5c5c5" stroke-width="1.1" fill="none"/></svg>
<svg style="left:1873px;top:749px;width:13px;height:8px;" viewBox="0 0 13 8"><path d="M1 7 L6.5 1.5 L12 7" stroke="#c5c5c5" stroke-width="1.3" fill="none"/></svg>
<svg style="left:1895px;top:748px;width:11px;height:11px;" viewBox="0 0 11 11"><path d="M1 1 L10 10 M10 1 L1 10" stroke="#c5c5c5" stroke-width="1.4"/></svg>
<span style="left:324px;top:788.04px;font-family:'Liberation Mono', monospace;font-size:13px;line-height:17px;font-weight:400;color:#cccccc;letter-spacing:-0.7999999999999998px;">Light = 93.33 lux</span>
<span style="left:324px;top:822.04px;font-family:'Liberation Mono', monospace;font-size:13px;line-height:17px;font-weight:400;color:#cccccc;letter-spacing:-0.7999999999999998px;">Temperature = 20.14 *C</span>
<span style="left:324px;top:839.04px;font-family:'Liberation Mono', monospace;font-size:13px;line-height:17px;font-weight:400;color:#cccccc;letter-spacing:-0.7999999999999998px;">Pressure = 1015.88 hPa</span>
<span style="left:324px;top:856.04px;font-family:'Liberation Mono', monospace;font-size:13px;line-height:17px;font-weight:400;color:#cccccc;letter-spacing:-0.7999999999999998px;">Altitude = -21.90 m</span>
<span style="left:324px;top:873.04px;font-family:'Liberation Mono', monospace;font-size:13px;line-height:17px;font-weight:400;color:#cccccc;letter-spacing:-0.7999999999999998px;">Light = 92.50 lux</span>
<span style="left:324px;top:907.04px;font-family:'Liberation Mono', monospace;font-size:13px;line-height:17px;font-weight:400;color:#cccccc;letter-spacing:-0.7999999999999998px;">Temperature = 20.15 *C</span>
<span style="left:324px;top:924.04px;font-family:'Liberation Mono', monospace;font-size:13px;line-height:17px;font-weight:400;color:#cccccc;letter-spacing:-0.7999999999999998px;">Pressure = 1015.84 hPa</span>
<span style="left:324px;top:941.04px;font-family:'Liberation Mono', monospace;font-size:13px;line-height:17px;font-weight:400;color:#cccccc;letter-spacing:-0.7999999999999998px;">Altitude = -21.56 m</span>
<span style="left:324px;top:958.04px;font-family:'Liberation Mono', monospace;font-size:13px;line-height:17px;font-weight:400;color:#cccccc;letter-spacing:-0.7999999999999998px;">Light = 90.83 lux</span>
<svg style="left:555px;top:816px;width:8px;height:16px;" viewBox="0 0 8 16"><path d="M1 1 H7 M4 1 V15 M1 15 H7" stroke="#d0d0d0" stroke-width="1.2"/></svg>
<div style="left:1651px;top:786px;width:3px;height:6px;background:#5a5a5a;"></div>
<div style="left:1651px;top:877px;width:11px;height:133px;background:#424242;"></div>
<div style="left:1661px;top:770px;width:1px;height:240px;background:#3c3c3c;"></div>
<div style="left:1662px;top:814px;width:257px;height:22px;background:#37373d;"></div>
<svg style="left:1672px;top:773px;width:15px;height:15px;" viewBox="0 0 15 15"><rect x="0.5" y="0.5" width="14" height="14" stroke="#c5c5c5" fill="none"/><path d="M5 3.8 L8.5 7.5 L5 11.2" stroke="#c5c5c5" stroke-width="1.2" fill="none"/></svg>
<span style="left:1691px;top:772.80px;font-family:'Liberation Sans', sans-serif;font-size:13px;line-height:17px;font-weight:400;color:#cccccc;letter-spacing:0px;transform:scaleX(0.9894);">powershell</span>
<svg style="left:1672px;top:795px;width:15px;height:15px;" viewBox="0 0 15 15"><rect x="0.5" y="0.5" width="14" height="14" stroke="#c5c5c5" fill="none"/><path d="M5 3.8 L8.5 7.5 L5 11.2" stroke="#c5c5c5" stroke-width="1.2" fill="none"/></svg>
<span style="left:1691px;top:794.80px;font-family:'Liberation Sans', sans-serif;font-size:13px;line-height:17px;font-weight:400;color:#cccccc;letter-spacing:0px;transform:scaleX(0.9710);">PlatformIO: Upload (Weather_St...</span>
<svg style="left:1672px;top:817px;width:15px;height:15px;" viewBox="0 0 15 15"><rect x="0.5" y="0.5" width="14" height="14" stroke="#c5c5c5" fill="none"/><path d="M5 3.8 L8.5 7.5 L5 11.2" stroke="#c5c5c5" stroke-width="1.2" fill="none"/></svg>
<span style="left:1691px;top:816.80px;font-family:'Liberation Sans', sans-serif;font-size:13px;line-height:17px;font-weight:400;color:#cccccc;letter-spacing:0px;transform:scaleX(0.9805);">PlatformIO: Monitor (Weather_St...</span>
<svg style="left:1895px;top:796px;width:14px;height:12px;" viewBox="0 0 14 12"><path d="M1 6.5 L4.8 10.5 L13 1.5" stroke="#c5c5c5" stroke-width="1.3" fill="none"/></svg>
<svg style="left:1894px;top:817px;width:16px;height:8px;" viewBox="0 0 16 8"><path d="M1.5 7 A6.5 6.5 0 0 1 14.5 7" stroke="#c5c5c5" stroke-width="1.3" fill="none"/></svg>
<svg style="left:15px;top:1015px;width:13px;height:13px;" viewBox="0 0 13 13"><circle cx="6.5" cy="6.5" r="5.8" stroke="#fff" stroke-width="1.2" fill="none"/><path d="M4 4 L9 9 M9 4 L4 9" stroke="#fff" stroke-width="1.2"/></svg>
<span style="left:32px;top:1013.84px;font-family:'Liberation Sans', sans-serif;font-size:12px;line-height:16px;font-weight:400;color:#ffffff;letter-spacing:0px;transform:scaleX(0.9869);">0</span>
<svg style="left:43px;top:1014px;width:13px;height:13px;" viewBox="0 0 13 13"><path d="M6.5 1 L12.3 12 H0.7 Z" stroke="#fff" stroke-width="1.2" fill="none" stroke-linejoin="round"/><path d="M6.5 5 V8.5 M6.5 9.8 V11" stroke="#fff" stroke-width="1.2"/></svg>
<span style="left:59.4px;top:1013.84px;font-family:'Liberation Sans', sans-serif;font-size:12px;line-height:16px;font-weight:400;color:#ffffff;letter-spacing:0px;transform:scaleX(0.9421);">0</span>
<svg style="left:82px;top:1014px;width:14px;height:14px;" viewBox="0 0 14 14"><path d="M2 12.5 L10 4.5 M1.5 1.5 L3.5 3.5 L12.5 12.5" stroke="#fff" stroke-width="2"/><path d="M8.5 2.5 A3 3 0 1 0 12 6" stroke="#fff" stroke-width="2" fill="none"/><path d="M0.5 0.5 L3 1 L3.5 3.5 L1 3 Z" fill="#fff"/></svg>
<span style="left:100px;top:1013.84px;font-family:'Liberation Sans', sans-serif;font-size:12px;line-height:16px;font-weight:400;color:#ffffff;letter-spacing:0px;transform:scaleX(0.6729);">1</span>
<svg style="left:122px;top:1014px;width:14px;height:14px;" viewBox="0 0 14 14"><path d="M1 7 L7 1.5 L13 7 M2.5 5.8 V12.5 H5.5 V9 H8.5 V12.5 H11.5 V5.8" stroke="#fff" stroke-width="1.2" fill="none" stroke-linejoin="round"/></svg>
<svg style="left:152px;top:1015px;width:13px;height:12px;" viewBox="0 0 13 12"><path d="M1 6 L4.5 10 L12 1.5" stroke="#fff" stroke-width="1.3" fill="none"/></svg>
<svg style="left:183px;top:1015px;width:12px;height:12px;" viewBox="0 0 12 12"><path d="M0.5 6 H11 M6.5 1.5 L11 6 L6.5 10.5" stroke="#fff" stroke-width="1.3" fill="none"/></svg>
<svg style="left:213px;top:1014px;width:10px;height:14px;" viewBox="0 0 10 14"><path d="M0.5 3 H9.5 M3 3 V1 H7 V3 M1.5 3.5 L2.3 13 H7.7 L8.5 3.5 Z" stroke="#fff" stroke-width="1.1" fill="none"/><path d="M3.8 5 V11 M6.2 5 V11" stroke="#fff" stroke-width="0.9"/></svg>
<svg style="left:243px;top:1014px;width:11px;height:14px;" viewBox="0 0 11 14"><path d="M3.5 1 H7.5 M4 1 V5.5 L0.8 12.5 H10.2 L7 5.5 V1" stroke="#fff" stroke-width="1.2" fill="none" stroke-linejoin="round"/></svg>
<svg style="left:274px;top:1014px;width:9px;height:14px;" viewBox="0 0 9 14"><path d="M2.5 0.5 V4 M6.5 0.5 V4 M0.8 4 H8.2 V7 A3.7 3.7 0 0 1 0.8 7 Z M4.5 10.5 V13.5" stroke="#fff" stroke-width="1.2" fill="none"/></svg>
<svg style="left:302px;top:1014px;width:13px;height:14px;" viewBox="0 0 13 14"><rect x="0.6" y="0.6" width="11.8" height="12.8" stroke="#fff" stroke-width="1.2" fill="none"/><path d="M4.5 4 L7.5 7 L4.5 10" stroke="#fff" stroke-width="1.2" fill="none"/></svg>
<svg style="left:332px;top:1014px;width:14px;height:14px;" viewBox="0 0 14 14"><path d="M0.6 3 H5 L6.5 4.5 H13.4 V12.6 H0.6 Z" stroke="#fff" stroke-width="1.1" fill="none"/><circle cx="4.5" cy="9.5" r="2.4" fill="#fff"/></svg>
<span style="left:349px;top:1013.84px;font-family:'Liberation Sans', sans-serif;font-size:12px;line-height:16px;font-weight:400;color:#ffffff;letter-spacing:0px;transform:scaleX(0.9746);">Default (Weather_Station)</span>
<span style="left:1515px;top:1013.84px;font-family:'Liberation Sans', sans-serif;font-size:12px;line-height:16px;font-weight:400;color:#ffffff;letter-spacing:0px;transform:scaleX(0.9580);">Ln 31, Col 1</span>
<span style="left:1593px;top:1013.84px;font-family:'Liberation Sans', sans-serif;font-size:12px;line-height:16px;font-weight:400;color:#ffffff;letter-spacing:0px;transform:scaleX(0.9180);">Spaces: 2</span>
<span style="left:1659px;top:1013.84px;font-family:'Liberation Sans', sans-serif;font-size:12px;line-height:16px;font-weight:400;color:#ffffff;letter-spacing:0px;transform:scaleX(0.9118);">UTF-8</span>
<span style="left:1706px;top:1013.84px;font-family:'Liberation Sans', sans-serif;font-size:12px;line-height:16px;font-weight:400;color:#ffffff;letter-spacing:0px;transform:scaleX(0.8295);">CRLF</span>
<span style="left:1748px;top:1013.84px;font-family:'Liberation Sans', sans-serif;font-size:12px;line-height:16px;font-weight:400;color:#ffffff;letter-spacing:0px;transform:scaleX(1.0138);">C++</span>
<span style="left:1788px;top:1013.84px;font-family:'Liberation Sans', sans-serif;font-size:12px;line-height:16px;font-weight:400;color:#ffffff;letter-spacing:0px;transform:scaleX(0.9937);">PlatformIO</span>
<svg style="left:1861px;top:1014px;width:15px;height:14px;" viewBox="0 0 15 14"><circle cx="5" cy="6.5" r="2.6" stroke="#fff" stroke-width="1.2" fill="none"/><path d="M0.8 13.5 C1.5 10.5 3 9.5 5 9.5 C7 9.5 8.5 10.5 9.2 13.5" stroke="#fff" stroke-width="1.2" fill="none"/><path d="M6 1 H14 V6.5 H11 L9 8.5 V6.5 H8.5" stroke="#fff" stroke-width="1.1" fill="none"/></svg>
<svg style="left:1891px;top:1014px;width:14px;height:14px;" viewBox="0 0 14 14"><path d="M3 10 V6 A4 4 0 0 1 11 6 V10 L12.5 11.5 H1.5 Z M5.5 12.5 A1.5 1.5 0 0 0 8.5 12.5" stroke="#fff" stroke-width="1.2" fill="none" stroke-linejoin="round"/></svg>
<svg style="left:21px;top:1045px;width:23px;height:23px;" viewBox="0 0 23 23"><defs><linearGradient id="wl" gradientUnits="userSpaceOnUse" x1="0" y1="0" x2="23" y2="23"><stop offset="0" stop-color="#6fd6ff"/><stop offset="1" stop-color="#1b8ef0"/></linearGradient></defs><rect x="0" y="0" width="11" height="11" fill="url(#wl)"/><rect x="12" y="0" width="11" height="11" fill="url(#wl)"/><rect x="0" y="12" width="11" height="11" fill="url(#wl)"/><rect x="12" y="12" width="11" height="11" fill="url(#wl)"/></svg>
<div style="left:58px;top:1040px;width:102px;height:32px;background:#2c2c2c;border-radius:16px;"></div>
<svg style="left:80px;top:1049px;width:15px;height:15px;" viewBox="0 0 15 15"><circle cx="9.5" cy="5.5" r="4.5" stroke="#fff" stroke-width="1.4" fill="none"/><path d="M6.3 8.7 L1 14" stroke="#fff" stroke-width="1.6" stroke-linecap="round"/></svg>
<span style="left:98.5px;top:1048.67px;font-family:'Liberation Sans', sans-serif;font-size:12.5px;line-height:16px;font-weight:400;color:#ffffff;letter-spacing:0px;transform:scaleX(0.9472);">Zoeken</span>
<div style="left:342px;top:1036px;width:40px;height:40px;background:#2b2b2b;border-radius:5px;"></div>
<svg style="left:173px;top:1045px;width:25px;height:22px;" viewBox="0 0 25 22"><path d="M0 3 Q0 1 2 1 H9 L11 3 H23 Q25 3 25 5 V7 H0 Z" fill="#e8a81e"/><rect x="0" y="5" width="25" height="17" rx="1.5" fill="#ffd65c"/><rect x="6" y="15" width="13" height="7" fill="#2f7fd6"/></svg>
<svg style="left:217px;top:1044px;width:25px;height:25px;" viewBox="0 0 25 25"><ellipse cx="12.5" cy="12.5" rx="12" ry="12" fill="#e3132d"/><ellipse cx="12.5" cy="12.5" rx="5" ry="8.3" fill="#202020"/></svg>
<svg style="left:261px;top:1044px;width:24px;height:23px;" viewBox="0 0 24 23"><rect x="0" y="0" width="24" height="23" rx="3" fill="#001e36"/><text x="3.5" y="16" font-family="Liberation Sans" font-weight="700" font-size="11.5" fill="#31a8ff">Ps</text></svg>
<svg style="left:305px;top:1044px;width:25px;height:25px;" viewBox="0 0 25 25"><path d="M18 1 L24 4 V21 L18 24 L7 14 L2.5 17.5 L1 16.5 V8.5 L2.5 7.5 L7 11 Z M18 7 L11 12.5 L18 18 Z" fill="#1f8ad2"/><path d="M18 1 L24 4 V21 L18 24 Z" fill="#35a5f0"/></svg>
<svg style="left:350px;top:1044px;width:24px;height:24px;" viewBox="0 0 24 24"><circle cx="12" cy="12" r="10.8" fill="#252525" stroke="#d8d8d8" stroke-width="1.4"/><path d="M12 12 C12.5 8.5 10.5 5.5 7 5.5 M12 12 C15 13.5 16.5 17 14.5 19.5 M12 12 C9.5 14.5 6 14.5 4.2 12" stroke="#d0d0d0" stroke-width="1.7" fill="none" stroke-linecap="round"/></svg>
<svg style="left:393px;top:1044px;width:26px;height:24px;" viewBox="0 0 26 24"><rect x="6" y="0" width="20" height="24" rx="2" fill="#2b7cd3"/><rect x="6" y="6" width="20" height="6" fill="#185abd"/><rect x="6" y="12" width="20" height="6" fill="#103f91"/><rect x="0" y="5" width="14" height="14" rx="1.5" fill="#185abd"/><text x="1.5" y="16.5" font-family="Liberation Sans" font-weight="700" font-size="11" fill="#fff">W</text></svg>
<div style="left:183px;top:1072px;width:6px;height:3px;background:#9a9a9a;border-radius:2px;"></div>
<div style="left:227px;top:1072px;width:6px;height:3px;background:#9a9a9a;border-radius:2px;"></div>
<div style="left:315px;top:1072px;width:6px;height:3px;background:#9a9a9a;border-radius:2px;"></div>
<div style="left:354px;top:1072px;width:16px;height:3px;background:#9a9a9a;border-radius:2px;"></div>
<div style="left:403px;top:1072px;width:6px;height:3px;background:#9a9a9a;border-radius:2px;"></div>
<svg style="left:1703px;top:1051px;width:14px;height:8px;" viewBox="0 0 14 8"><path d="M1 7 L7 1 L13 7" stroke="#fff" stroke-width="1.2" fill="none"/></svg>
<svg style="left:1733px;top:1047px;width:12px;height:18px;" viewBox="0 0 12 18"><rect x="3.5" y="0.7" width="5" height="10" rx="2.5" stroke="#fff" stroke-width="1.2" fill="none"/><path d="M1 8 A5 5 0 0 0 11 8 M6 13 V17" stroke="#fff" stroke-width="1.2" fill="none"/></svg>
<svg style="left:1762px;top:1049px;width:18px;height:13px;" viewBox="0 0 18 13"><path d="M1 4.5 A11 11 0 0 1 17 4.5 M3.5 7.2 A7.5 7.5 0 0 1 14.5 7.2 M6 9.8 A4 4 0 0 1 12 9.8" stroke="#fff" stroke-width="1.4" fill="none"/><circle cx="9" cy="12" r="1.1" fill="#fff"/></svg>
<svg style="left:1786px;top:1049px;width:16px;height:14px;" viewBox="0 0 16 14"><path d="M1 4.5 H4 L8 1 V13 L4 9.5 H1 Z" stroke="#fff" stroke-width="1.2" fill="none" stroke-linejoin="round"/><path d="M10.5 4.5 A3.5 3.5 0 0 1 10.5 9.5 M12.5 2.5 A6 6 0 0 1 12.5 11.5" stroke="#fff" stroke-width="1.1" fill="none"/></svg>
<svg style="left:1811px;top:1049px;width:18px;height:13px;" viewBox="0 0 18 13"><rect x="3.6" y="3.6" width="11.5" height="7.5" rx="1.2" stroke="#fff" stroke-width="1.2" fill="none"/><rect x="5.5" y="5.5" width="7.5" height="3.8" fill="#fff"/><rect x="15.5" y="5.5" width="1.6" height="3.6" fill="#fff"/><path d="M1.5 0.5 V3 M3.8 0.5 V3 M0.6 3.2 H4.8 V5.5 A2 2 0 0 1 0.6 5.5 Z M2.7 7.5 V10" stroke="#fff" stroke-width="0.9" fill="none"/></svg>
<span style="left:1875.5px;top:1039.84px;font-family:'Liberation Sans', sans-serif;font-size:12px;line-height:16px;font-weight:400;color:#ffffff;letter-spacing:0px;transform:scaleX(0.8158);">13:15</span>
<span style="left:1842px;top:1055.84px;font-family:'Liberation Sans', sans-serif;font-size:12px;line-height:16px;font-weight:400;color:#ffffff;letter-spacing:0px;transform:scaleX(0.9657);">16/12/2022</span>
</body></html>
